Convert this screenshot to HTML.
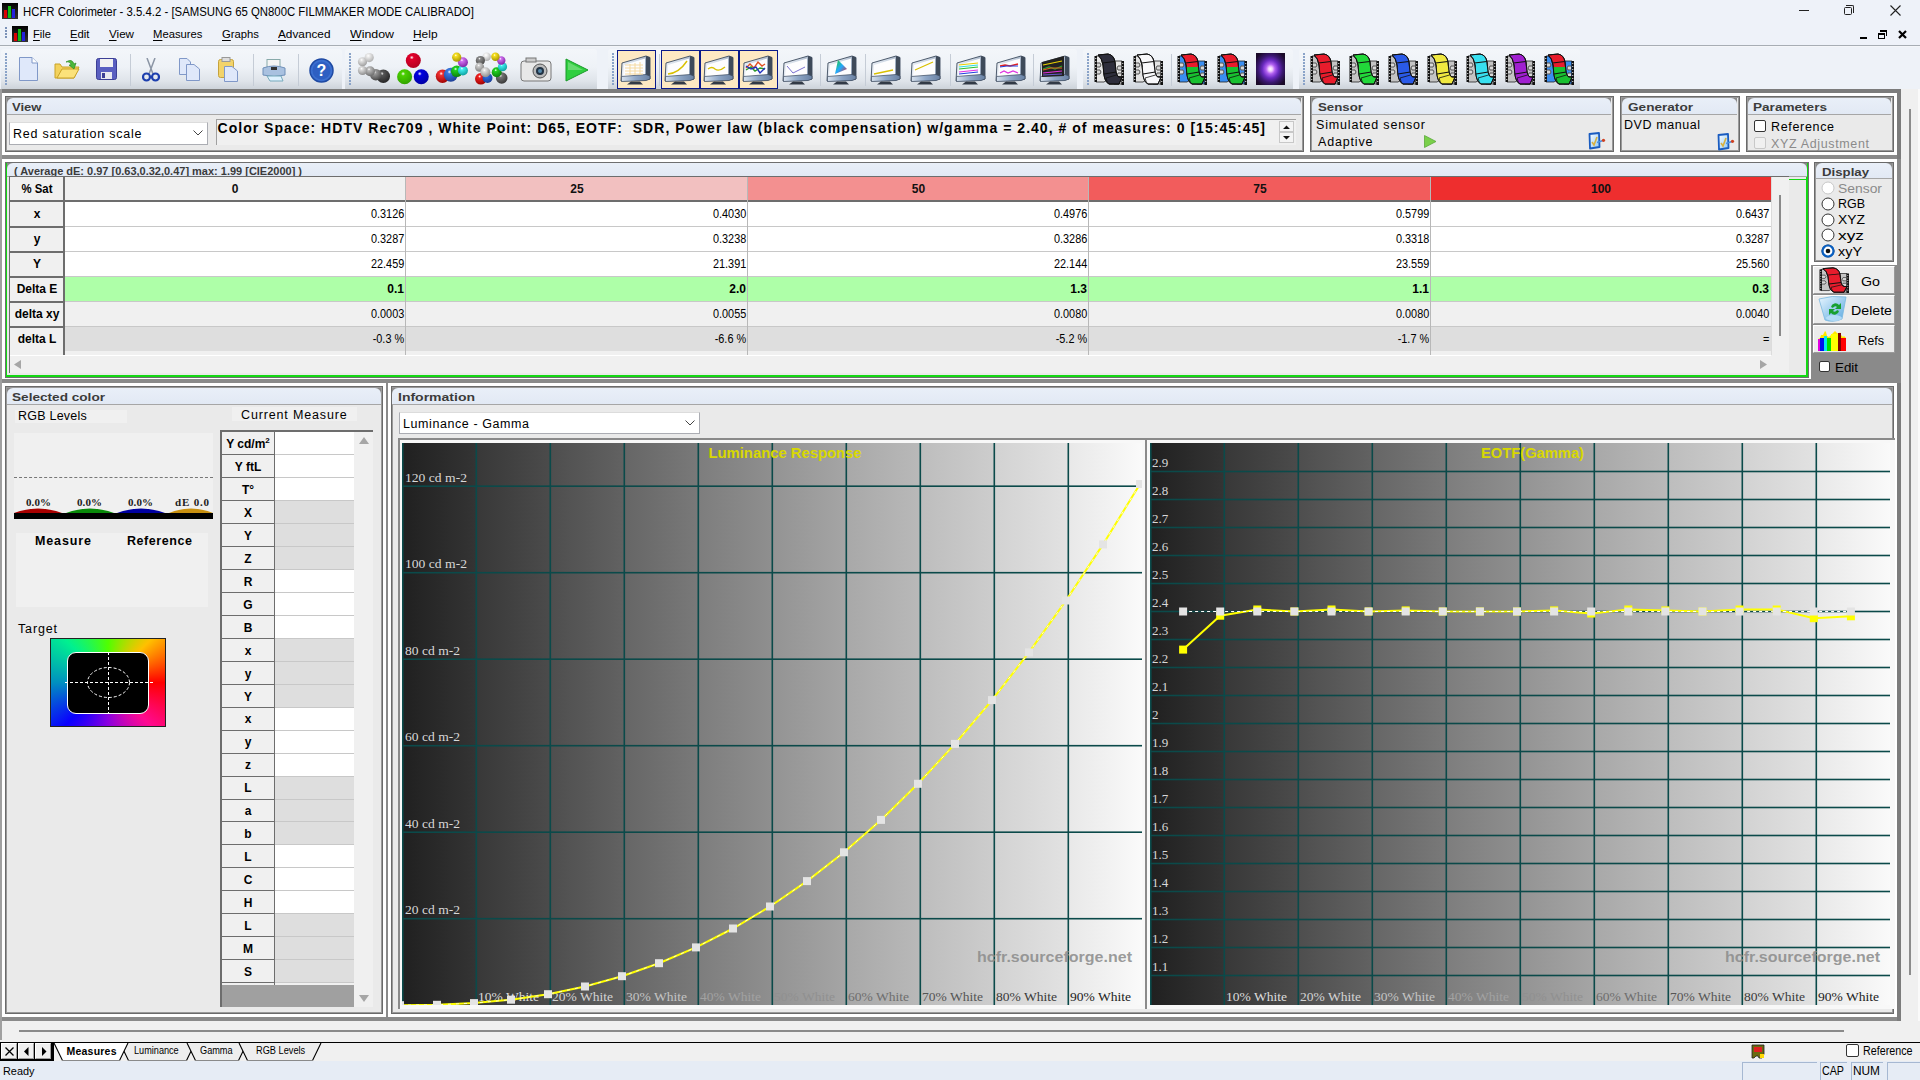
<!DOCTYPE html><html><head><meta charset="utf-8"><style>html,body{margin:0;padding:0;width:1920px;height:1080px;overflow:hidden;position:relative;background:#f0f0f0;font-family:"Liberation Sans",sans-serif}</style></head><body><div style="position:absolute;left:0px;top:0px;width:1920px;height:22px;background:#eef2f9"></div>
<svg style="position:absolute;left:2px;top:3px" width="16" height="16" viewBox="0 0 16 16"><defs><linearGradient id="ag2" x1="0" y1="0" x2="0" y2="1"><stop offset="0" stop-color="#000"/><stop offset="1" stop-color="#333"/></linearGradient></defs><rect x="0" y="0" width="16" height="16" fill="url(#ag2)"/><rect x="2" y="7" width="3" height="8" fill="#d00"/><rect x="6" y="3" width="3" height="12" fill="#1b1"/><rect x="10" y="6" width="3" height="9" fill="#22d"/></svg>
<div style="position:absolute;left:23px;top:3.74px;font:400 12.3px/16px 'Liberation Sans', sans-serif;color:#000;letter-spacing:0.000px;white-space:pre;transform:scaleX(0.9241);transform-origin:left center;">HCFR Colorimeter - 3.5.4.2 - [SAMSUNG 65 QN800C FILMMAKER MODE CALIBRADO]</div>
<div style="position:absolute;left:1799px;top:10px;width:10px;height:1px;background:#222"></div>
<div style="position:absolute;left:1844px;top:7px;width:8px;height:8px;border:1px solid #222;border-radius:1.5px;box-sizing:border-box"></div>
<div style="position:absolute;left:1846px;top:5px;width:8px;height:8px;border-top:1px solid #222;border-right:1px solid #222;border-top-right-radius:2px;box-sizing:border-box"></div>
<svg style="position:absolute;left:1890px;top:5px" width="11" height="11"><path d="M0.5 0.5L10.5 10.5M10.5 0.5L0.5 10.5" stroke="#222" stroke-width="1.1"/></svg>
<div style="position:absolute;left:0px;top:22px;width:1920px;height:23px;background:#eef2f9"></div>
<div style="position:absolute;left:0px;top:45px;width:1920px;height:1px;background:#a7adb4"></div>
<div style="position:absolute;left:0px;top:46px;width:1920px;height:1px;background:#f4f6f9"></div>
<div style="position:absolute;left:5px;top:27px;width:2px;height:2px;background:#7b92b8"></div>
<div style="position:absolute;left:5px;top:30px;width:2px;height:2px;background:#7b92b8"></div>
<div style="position:absolute;left:5px;top:33px;width:2px;height:2px;background:#7b92b8"></div>
<div style="position:absolute;left:5px;top:36px;width:2px;height:2px;background:#7b92b8"></div>
<svg style="position:absolute;left:12px;top:26px" width="16" height="16" viewBox="0 0 16 16"><defs><linearGradient id="ag12" x1="0" y1="0" x2="0" y2="1"><stop offset="0" stop-color="#000"/><stop offset="1" stop-color="#333"/></linearGradient></defs><rect x="0" y="0" width="16" height="16" fill="url(#ag12)"/><rect x="2" y="7" width="3" height="8" fill="#d00"/><rect x="6" y="3" width="3" height="12" fill="#1b1"/><rect x="10" y="6" width="3" height="9" fill="#22d"/></svg>
<div style="position:absolute;left:33px;top:27.02px;font:400 11.5px/15px 'Liberation Sans', sans-serif;color:#000;letter-spacing:0.000px;white-space:pre;transform:scaleX(0.9713);transform-origin:left center;"><u style="text-decoration-thickness:1px;text-underline-offset:2px">F</u>ile</div>
<div style="position:absolute;left:70px;top:27.02px;font:400 11.5px/15px 'Liberation Sans', sans-serif;color:#000;letter-spacing:0.000px;white-space:pre;transform:scaleX(0.9840);transform-origin:left center;"><u style="text-decoration-thickness:1px;text-underline-offset:2px">E</u>dit</div>
<div style="position:absolute;left:108.5px;top:27.02px;font:400 11.5px/15px 'Liberation Sans', sans-serif;color:#000;letter-spacing:0.000px;white-space:pre;transform:scaleX(1.0113);transform-origin:left center;"><u style="text-decoration-thickness:1px;text-underline-offset:2px">V</u>iew</div>
<div style="position:absolute;left:153px;top:27.02px;font:400 11.5px/15px 'Liberation Sans', sans-serif;color:#000;letter-spacing:0.000px;white-space:pre;transform:scaleX(0.9803);transform-origin:left center;"><u style="text-decoration-thickness:1px;text-underline-offset:2px">M</u>easures</div>
<div style="position:absolute;left:222px;top:27.02px;font:400 11.5px/15px 'Liberation Sans', sans-serif;color:#000;letter-spacing:0.000px;white-space:pre;transform:scaleX(0.9811);transform-origin:left center;"><u style="text-decoration-thickness:1px;text-underline-offset:2px">G</u>raphs</div>
<div style="position:absolute;left:278px;top:27.02px;font:400 11.5px/15px 'Liberation Sans', sans-serif;color:#000;letter-spacing:0.000px;white-space:pre;transform:scaleX(1.0264);transform-origin:left center;"><u style="text-decoration-thickness:1px;text-underline-offset:2px">A</u>dvanced</div>
<div style="position:absolute;left:350px;top:27.02px;font:400 11.5px/15px 'Liberation Sans', sans-serif;color:#000;letter-spacing:0.000px;white-space:pre;transform:scaleX(1.0757);transform-origin:left center;"><u style="text-decoration-thickness:1px;text-underline-offset:2px">W</u>indow</div>
<div style="position:absolute;left:413px;top:27.02px;font:400 11.5px/15px 'Liberation Sans', sans-serif;color:#000;letter-spacing:0.000px;white-space:pre;transform:scaleX(1.0358);transform-origin:left center;"><u style="text-decoration-thickness:1px;text-underline-offset:2px">H</u>elp</div>
<div style="position:absolute;left:1860px;top:37px;width:7px;height:2px;background:#000"></div>
<div style="position:absolute;left:1878px;top:33px;width:7px;height:6px;border:1px solid #000;border-top-width:2px;box-sizing:border-box"></div>
<div style="position:absolute;left:1880px;top:30px;width:7px;height:6px;border-top:2px solid #000;border-right:1px solid #000;box-sizing:border-box"></div>
<svg style="position:absolute;left:1898px;top:30px" width="9" height="9"><path d="M1 1L8 8M8 1L1 8" stroke="#000" stroke-width="2.2"/></svg>
<div style="position:absolute;left:0px;top:47px;width:1920px;height:44px;background:#eef2f8"></div>
<div style="position:absolute;left:1px;top:49px;width:341px;height:40px;border-radius:3px 3px 0 0;background:linear-gradient(#f3f6fa 0%,#eef2f7 45%,#dfe4ea 80%,#cdd3da 100%)"></div>
<div style="position:absolute;left:5px;top:53px;width:2px;height:2px;background:#8aa3c8"></div>
<div style="position:absolute;left:5px;top:56px;width:2px;height:2px;background:#8aa3c8"></div>
<div style="position:absolute;left:5px;top:59px;width:2px;height:2px;background:#8aa3c8"></div>
<div style="position:absolute;left:5px;top:62px;width:2px;height:2px;background:#8aa3c8"></div>
<div style="position:absolute;left:5px;top:65px;width:2px;height:2px;background:#8aa3c8"></div>
<div style="position:absolute;left:5px;top:68px;width:2px;height:2px;background:#8aa3c8"></div>
<div style="position:absolute;left:5px;top:71px;width:2px;height:2px;background:#8aa3c8"></div>
<div style="position:absolute;left:5px;top:74px;width:2px;height:2px;background:#8aa3c8"></div>
<div style="position:absolute;left:5px;top:77px;width:2px;height:2px;background:#8aa3c8"></div>
<div style="position:absolute;left:5px;top:80px;width:2px;height:2px;background:#8aa3c8"></div>
<div style="position:absolute;left:5px;top:83px;width:2px;height:2px;background:#8aa3c8"></div>
<div style="position:absolute;left:345px;top:49px;width:252px;height:40px;border-radius:3px 3px 0 0;background:linear-gradient(#f3f6fa 0%,#eef2f7 45%,#dfe4ea 80%,#cdd3da 100%)"></div>
<div style="position:absolute;left:349px;top:53px;width:2px;height:2px;background:#8aa3c8"></div>
<div style="position:absolute;left:349px;top:56px;width:2px;height:2px;background:#8aa3c8"></div>
<div style="position:absolute;left:349px;top:59px;width:2px;height:2px;background:#8aa3c8"></div>
<div style="position:absolute;left:349px;top:62px;width:2px;height:2px;background:#8aa3c8"></div>
<div style="position:absolute;left:349px;top:65px;width:2px;height:2px;background:#8aa3c8"></div>
<div style="position:absolute;left:349px;top:68px;width:2px;height:2px;background:#8aa3c8"></div>
<div style="position:absolute;left:349px;top:71px;width:2px;height:2px;background:#8aa3c8"></div>
<div style="position:absolute;left:349px;top:74px;width:2px;height:2px;background:#8aa3c8"></div>
<div style="position:absolute;left:349px;top:77px;width:2px;height:2px;background:#8aa3c8"></div>
<div style="position:absolute;left:349px;top:80px;width:2px;height:2px;background:#8aa3c8"></div>
<div style="position:absolute;left:349px;top:83px;width:2px;height:2px;background:#8aa3c8"></div>
<div style="position:absolute;left:608px;top:49px;width:469px;height:40px;border-radius:3px 3px 0 0;background:linear-gradient(#f3f6fa 0%,#eef2f7 45%,#dfe4ea 80%,#cdd3da 100%)"></div>
<div style="position:absolute;left:612px;top:53px;width:2px;height:2px;background:#8aa3c8"></div>
<div style="position:absolute;left:612px;top:56px;width:2px;height:2px;background:#8aa3c8"></div>
<div style="position:absolute;left:612px;top:59px;width:2px;height:2px;background:#8aa3c8"></div>
<div style="position:absolute;left:612px;top:62px;width:2px;height:2px;background:#8aa3c8"></div>
<div style="position:absolute;left:612px;top:65px;width:2px;height:2px;background:#8aa3c8"></div>
<div style="position:absolute;left:612px;top:68px;width:2px;height:2px;background:#8aa3c8"></div>
<div style="position:absolute;left:612px;top:71px;width:2px;height:2px;background:#8aa3c8"></div>
<div style="position:absolute;left:612px;top:74px;width:2px;height:2px;background:#8aa3c8"></div>
<div style="position:absolute;left:612px;top:77px;width:2px;height:2px;background:#8aa3c8"></div>
<div style="position:absolute;left:612px;top:80px;width:2px;height:2px;background:#8aa3c8"></div>
<div style="position:absolute;left:612px;top:83px;width:2px;height:2px;background:#8aa3c8"></div>
<div style="position:absolute;left:1083px;top:49px;width:210px;height:40px;border-radius:3px 3px 0 0;background:linear-gradient(#f3f6fa 0%,#eef2f7 45%,#dfe4ea 80%,#cdd3da 100%)"></div>
<div style="position:absolute;left:1087px;top:53px;width:2px;height:2px;background:#8aa3c8"></div>
<div style="position:absolute;left:1087px;top:56px;width:2px;height:2px;background:#8aa3c8"></div>
<div style="position:absolute;left:1087px;top:59px;width:2px;height:2px;background:#8aa3c8"></div>
<div style="position:absolute;left:1087px;top:62px;width:2px;height:2px;background:#8aa3c8"></div>
<div style="position:absolute;left:1087px;top:65px;width:2px;height:2px;background:#8aa3c8"></div>
<div style="position:absolute;left:1087px;top:68px;width:2px;height:2px;background:#8aa3c8"></div>
<div style="position:absolute;left:1087px;top:71px;width:2px;height:2px;background:#8aa3c8"></div>
<div style="position:absolute;left:1087px;top:74px;width:2px;height:2px;background:#8aa3c8"></div>
<div style="position:absolute;left:1087px;top:77px;width:2px;height:2px;background:#8aa3c8"></div>
<div style="position:absolute;left:1087px;top:80px;width:2px;height:2px;background:#8aa3c8"></div>
<div style="position:absolute;left:1087px;top:83px;width:2px;height:2px;background:#8aa3c8"></div>
<div style="position:absolute;left:1299px;top:49px;width:281px;height:40px;border-radius:3px 3px 0 0;background:linear-gradient(#f3f6fa 0%,#eef2f7 45%,#dfe4ea 80%,#cdd3da 100%)"></div>
<div style="position:absolute;left:1303px;top:53px;width:2px;height:2px;background:#8aa3c8"></div>
<div style="position:absolute;left:1303px;top:56px;width:2px;height:2px;background:#8aa3c8"></div>
<div style="position:absolute;left:1303px;top:59px;width:2px;height:2px;background:#8aa3c8"></div>
<div style="position:absolute;left:1303px;top:62px;width:2px;height:2px;background:#8aa3c8"></div>
<div style="position:absolute;left:1303px;top:65px;width:2px;height:2px;background:#8aa3c8"></div>
<div style="position:absolute;left:1303px;top:68px;width:2px;height:2px;background:#8aa3c8"></div>
<div style="position:absolute;left:1303px;top:71px;width:2px;height:2px;background:#8aa3c8"></div>
<div style="position:absolute;left:1303px;top:74px;width:2px;height:2px;background:#8aa3c8"></div>
<div style="position:absolute;left:1303px;top:77px;width:2px;height:2px;background:#8aa3c8"></div>
<div style="position:absolute;left:1303px;top:80px;width:2px;height:2px;background:#8aa3c8"></div>
<div style="position:absolute;left:1303px;top:83px;width:2px;height:2px;background:#8aa3c8"></div>
<div style="position:absolute;left:130px;top:54px;width:1px;height:32px;background:#c5ccd6"></div>
<div style="position:absolute;left:253px;top:54px;width:1px;height:32px;background:#c5ccd6"></div>
<div style="position:absolute;left:298px;top:54px;width:1px;height:32px;background:#c5ccd6"></div>
<div style="position:absolute;left:659px;top:54px;width:1px;height:32px;background:#c5ccd6"></div>
<div style="position:absolute;left:820px;top:54px;width:1px;height:32px;background:#c5ccd6"></div>
<div style="position:absolute;left:865px;top:54px;width:1px;height:32px;background:#c5ccd6"></div>
<div style="position:absolute;left:950px;top:54px;width:1px;height:32px;background:#c5ccd6"></div>
<div style="position:absolute;left:1033px;top:54px;width:1px;height:32px;background:#c5ccd6"></div>
<div style="position:absolute;left:1171px;top:54px;width:1px;height:32px;background:#c5ccd6"></div>
<svg style="position:absolute;left:19px;top:57px" width="19" height="24" viewBox="0 0 19 24"><path d="M0.5 0.5H13L18.5 6V23.5H0.5Z" fill="#dfe8fa" stroke="#8098c8"/><path d="M13 0.5V6H18.5" fill="#fff" stroke="#8098c8"/></svg>
<svg style="position:absolute;left:54px;top:58px" width="26" height="22" viewBox="0 0 26 22"><path d="M1 6 L1 20 L20 20 L25 9 L8 9 L6 6Z" fill="#f3d25c" stroke="#c9a227"/><path d="M3 20 L8 11 L25 11 L20 20Z" fill="#fbe27a" stroke="#c9a227"/><path d="M12 4 Q18 0 20 6 L22 5 L20 11 L15 7 L17 7 Q16 3 12 4Z" fill="#4cb83a" stroke="#2c8a22" stroke-width="0.7"/></svg>
<svg style="position:absolute;left:96px;top:58px" width="21" height="22" viewBox="0 0 21 22"><rect x="0.5" y="0.5" width="20" height="21" rx="2" fill="#5a5fc0" stroke="#3c3f96"/><rect x="4" y="1" width="13" height="8" fill="#f2f2f2"/><rect x="5" y="14" width="11" height="7" fill="#e8e8f0"/><rect x="6" y="15" width="3" height="5" fill="#3c3f96"/></svg>
<svg style="position:absolute;left:142px;top:58px" width="18" height="24" viewBox="0 0 18 24"><path d="M5 0 L11 16 M13 0 L7 16" stroke="#8b95a5" stroke-width="1.5"/><circle cx="4.5" cy="19" r="3.5" fill="none" stroke="#1d3fae" stroke-width="2.2"/><circle cx="13.5" cy="19" r="3.5" fill="none" stroke="#1d3fae" stroke-width="2.2"/></svg>
<svg style="position:absolute;left:179px;top:58px" width="22" height="23" viewBox="0 0 22 23"><path d="M0.5 0.5H8L11.5 4V16.5H0.5Z" fill="#dfe8fa" stroke="#8098c8"/><path d="M7.5 6.5H15L20.5 11V22.5H7.5Z" fill="#dfe8fa" stroke="#8098c8"/></svg>
<svg style="position:absolute;left:218px;top:57px" width="21" height="25" viewBox="0 0 21 25"><rect x="0.5" y="2.5" width="15" height="18" rx="2" fill="#f2d36a" stroke="#c5a23c"/><rect x="4" y="0.5" width="8" height="4" fill="#ddd" stroke="#999"/><path d="M6.5 9.5H14L19.5 14V24.5H6.5Z" fill="#dfe8fa" stroke="#8098c8"/></svg>
<svg style="position:absolute;left:262px;top:59px" width="24" height="23" viewBox="0 0 24 23"><rect x="5" y="0.5" width="13" height="8" fill="#f4f4f4" stroke="#8aa"/><path d="M1 9 Q12 5 23 9 L23 16 Q12 19 1 16Z" fill="#a9c1e0" stroke="#6f8fb8"/><rect x="9" y="8" width="6" height="3" fill="#333"/><path d="M5 17 L19 17 L21 22 L8 22Z" fill="#dff2ff" stroke="#7ab"/></svg>
<svg style="position:absolute;left:309px;top:58px" width="25" height="25" viewBox="0 0 25 25"><circle cx="12.5" cy="12.5" r="11.5" fill="#3b6fd0" stroke="#1f4aa3" stroke-width="1.5"/><circle cx="12.5" cy="12.5" r="9" fill="#2e5fc2"/><text x="12.5" y="18" font-family="Liberation Sans" font-weight="700" font-size="16" fill="#fff" text-anchor="middle">?</text></svg>
<svg width="0" height="0" style="position:absolute"><defs><radialGradient id="sp0" cx="0.4" cy="0.3" r="0.75"><stop offset="0" stop-color="#ffffff"/><stop offset="0.18" stop-color="#555"/><stop offset="1" stop-color="#222"/></radialGradient></defs></svg>
<svg width="0" height="0" style="position:absolute"><defs><radialGradient id="sp1" cx="0.4" cy="0.3" r="0.75"><stop offset="0" stop-color="#ffffff"/><stop offset="0.18" stop-color="#999"/><stop offset="1" stop-color="#444"/></radialGradient></defs></svg>
<svg width="0" height="0" style="position:absolute"><defs><radialGradient id="sp2" cx="0.4" cy="0.3" r="0.75"><stop offset="0" stop-color="#ffffff"/><stop offset="0.18" stop-color="#bbb"/><stop offset="1" stop-color="#666"/></radialGradient></defs></svg>
<svg width="0" height="0" style="position:absolute"><defs><radialGradient id="sp3" cx="0.4" cy="0.3" r="0.75"><stop offset="0" stop-color="#ffffff"/><stop offset="0.18" stop-color="#ddd"/><stop offset="1" stop-color="#888"/></radialGradient></defs></svg>
<svg width="0" height="0" style="position:absolute"><defs><radialGradient id="sp4" cx="0.4" cy="0.3" r="0.75"><stop offset="0" stop-color="#ffffff"/><stop offset="0.18" stop-color="#e4e4e4"/><stop offset="1" stop-color="#999"/></radialGradient></defs></svg>
<svg width="0" height="0" style="position:absolute"><defs><radialGradient id="sp5" cx="0.4" cy="0.3" r="0.75"><stop offset="0" stop-color="#ffffff"/><stop offset="0.18" stop-color="#eee"/><stop offset="1" stop-color="#aaa"/></radialGradient></defs></svg>
<svg width="0" height="0" style="position:absolute"><defs><radialGradient id="sp6" cx="0.4" cy="0.3" r="0.75"><stop offset="0" stop-color="#ffffff"/><stop offset="0.18" stop-color="#e0002a"/><stop offset="1" stop-color="#b00020"/></radialGradient></defs></svg>
<svg width="0" height="0" style="position:absolute"><defs><radialGradient id="sp7" cx="0.4" cy="0.3" r="0.75"><stop offset="0" stop-color="#ffffff"/><stop offset="0.18" stop-color="#4ad000"/><stop offset="1" stop-color="#30a000"/></radialGradient></defs></svg>
<svg width="0" height="0" style="position:absolute"><defs><radialGradient id="sp8" cx="0.4" cy="0.3" r="0.75"><stop offset="0" stop-color="#ffffff"/><stop offset="0.18" stop-color="#0000e0"/><stop offset="1" stop-color="#0000a0"/></radialGradient></defs></svg>
<svg width="0" height="0" style="position:absolute"><defs><radialGradient id="sp9" cx="0.4" cy="0.3" r="0.75"><stop offset="0" stop-color="#ffffff"/><stop offset="0.18" stop-color="#f03030"/><stop offset="1" stop-color="#900"/></radialGradient></defs></svg>
<svg width="0" height="0" style="position:absolute"><defs><radialGradient id="sp10" cx="0.4" cy="0.3" r="0.75"><stop offset="0" stop-color="#ffffff"/><stop offset="0.18" stop-color="#3a7ae0"/><stop offset="1" stop-color="#1a3a90"/></radialGradient></defs></svg>
<svg width="0" height="0" style="position:absolute"><defs><radialGradient id="sp11" cx="0.4" cy="0.3" r="0.75"><stop offset="0" stop-color="#ffffff"/><stop offset="0.18" stop-color="#20d020"/><stop offset="1" stop-color="#0a7a0a"/></radialGradient></defs></svg>
<svg width="0" height="0" style="position:absolute"><defs><radialGradient id="sp12" cx="0.4" cy="0.3" r="0.75"><stop offset="0" stop-color="#ffffff"/><stop offset="0.18" stop-color="#40f0f0"/><stop offset="1" stop-color="#0a9a9a"/></radialGradient></defs></svg>
<svg width="0" height="0" style="position:absolute"><defs><radialGradient id="sp13" cx="0.4" cy="0.3" r="0.75"><stop offset="0" stop-color="#ffffff"/><stop offset="0.18" stop-color="#d070f0"/><stop offset="1" stop-color="#7a20a0"/></radialGradient></defs></svg>
<svg width="0" height="0" style="position:absolute"><defs><radialGradient id="sp14" cx="0.4" cy="0.3" r="0.75"><stop offset="0" stop-color="#ffffff"/><stop offset="0.18" stop-color="#f8e020"/><stop offset="1" stop-color="#a09000"/></radialGradient></defs></svg>
<svg width="0" height="0" style="position:absolute"><defs><radialGradient id="sp15" cx="0.4" cy="0.3" r="0.75"><stop offset="0" stop-color="#ffffff"/><stop offset="0.18" stop-color="#f02020"/><stop offset="1" stop-color="#900"/></radialGradient></defs></svg>
<svg width="0" height="0" style="position:absolute"><defs><radialGradient id="sp16" cx="0.4" cy="0.3" r="0.75"><stop offset="0" stop-color="#ffffff"/><stop offset="0.18" stop-color="#2a6ae0"/><stop offset="1" stop-color="#1a3a90"/></radialGradient></defs></svg>
<svg width="0" height="0" style="position:absolute"><defs><radialGradient id="sp17" cx="0.4" cy="0.3" r="0.75"><stop offset="0" stop-color="#ffffff"/><stop offset="0.18" stop-color="#777"/><stop offset="1" stop-color="#333"/></radialGradient></defs></svg>
<svg width="0" height="0" style="position:absolute"><defs><radialGradient id="sp18" cx="0.4" cy="0.3" r="0.75"><stop offset="0" stop-color="#ffffff"/><stop offset="0.18" stop-color="#f4f4f4"/><stop offset="1" stop-color="#aaa"/></radialGradient></defs></svg>
<svg width="0" height="0" style="position:absolute"><defs><radialGradient id="sp19" cx="0.4" cy="0.3" r="0.75"><stop offset="0" stop-color="#ffffff"/><stop offset="0.18" stop-color="#888"/><stop offset="1" stop-color="#444"/></radialGradient></defs></svg>
<svg width="0" height="0" style="position:absolute"><defs><radialGradient id="sp20" cx="0.4" cy="0.3" r="0.75"><stop offset="0" stop-color="#ffffff"/><stop offset="0.18" stop-color="#ccc"/><stop offset="1" stop-color="#777"/></radialGradient></defs></svg>
<svg style="position:absolute;left:340px;top:50px" width="180" height="40"><circle cx="43.30000000000001" cy="26.299999999999997" r="6.7" fill="url(#sp0)"/><circle cx="35.80000000000001" cy="24.700000000000003" r="5.8" fill="url(#sp1)"/><circle cx="30" cy="21.299999999999997" r="5" fill="url(#sp2)"/><circle cx="22.5" cy="20.5" r="4.6" fill="url(#sp3)"/><circle cx="22.5" cy="11.75" r="4.6" fill="url(#sp4)"/><circle cx="29.19999999999999" cy="7.600000000000001" r="4.6" fill="url(#sp5)"/><circle cx="73.30000000000001" cy="10.5" r="7.5" fill="url(#sp6)"/><circle cx="64.60000000000002" cy="26.75" r="7.5" fill="url(#sp7)"/><circle cx="81.25" cy="26.75" r="7.5" fill="url(#sp8)"/><circle cx="102.5" cy="26.299999999999997" r="6.7" fill="url(#sp9)"/><circle cx="110.80000000000001" cy="24.700000000000003" r="7" fill="url(#sp10)"/><circle cx="116.69999999999999" cy="21.299999999999997" r="5.8" fill="url(#sp11)"/><circle cx="122.89999999999998" cy="20.5" r="5" fill="url(#sp12)"/><circle cx="122.89999999999998" cy="12.200000000000003" r="5" fill="url(#sp13)"/><circle cx="116.69999999999999" cy="7.200000000000003" r="4.6" fill="url(#sp14)"/><circle cx="140.8" cy="28.799999999999997" r="5.8" fill="url(#sp15)"/><circle cx="147.5" cy="28" r="5" fill="url(#sp16)"/><circle cx="161.7" cy="28" r="5.8" fill="url(#sp17)"/><circle cx="156.7" cy="22.200000000000003" r="5" fill="url(#sp11)"/><circle cx="162.5" cy="16.75" r="4.6" fill="url(#sp12)"/><circle cx="161.25" cy="10.5" r="4.2" fill="url(#sp13)"/><circle cx="155.39999999999998" cy="6.75" r="4.2" fill="url(#sp14)"/><circle cx="146.7" cy="6.75" r="4.2" fill="url(#sp18)"/><circle cx="140.39999999999998" cy="10.5" r="4.6" fill="url(#sp19)"/><circle cx="139.60000000000002" cy="17.200000000000003" r="4.6" fill="url(#sp20)"/><circle cx="145.39999999999998" cy="22.200000000000003" r="5" fill="url(#sp3)"/></svg>
<svg style="position:absolute;left:520px;top:56px" width="32" height="28" viewBox="0 0 32 28"><rect x="1" y="5" width="30" height="20" rx="3" fill="#e8e8e8" stroke="#777"/><rect x="6" y="2" width="10" height="4" fill="#ccc" stroke="#777"/><circle cx="20" cy="15" r="7" fill="#bbb" stroke="#555"/><circle cx="20" cy="15" r="4" fill="#234"/><circle cx="20" cy="15" r="2" fill="#58a"/></svg>
<svg style="position:absolute;left:565px;top:58px" width="24" height="24" viewBox="0 0 24 24"><path d="M1 1 L23 12 L1 23Z" fill="#2fcf3f" stroke="#1a9a2a"/><path d="M3 4 L18 12 L3 12Z" fill="#8be38f" opacity="0.6"/></svg>
<svg width="0" height="0" style="position:absolute"><defs><linearGradient id="mbz" x1="0" y1="0" x2="1" y2="0.3"><stop offset="0" stop-color="#f2f5f9"/><stop offset="0.6" stop-color="#c9d4e2"/><stop offset="1" stop-color="#8a9ab0"/></linearGradient><linearGradient id="mbase" x1="0" y1="0" x2="1" y2="0"><stop offset="0" stop-color="#d8e2ee"/><stop offset="0.5" stop-color="#8ea6c6"/><stop offset="1" stop-color="#6a82a4"/></linearGradient></defs></svg>
<div style="position:absolute;left:617px;top:50px;width:39px;height:39px;background:#fde9c3;border:1.5px solid #0a1a8a;box-sizing:border-box"></div>
<svg style="position:absolute;left:620px;top:53px" width="32" height="32" viewBox="0 0 32 32"><path d="M2 10 L26 3 L30 4.5 L30 26 L26 27 L1 28Z" fill="url(#mbz)" stroke="#3c4b5e" stroke-width="0.9"/><path d="M26 3 L30 4.5 L30 26 L26 27Z" fill="#3e4a5a"/><path d="M4 12 L25 5.5 L25 22 L3 23.5Z" fill="#fdfdfe"/><path d="M1.5 23.5 L26 21.5 L30 23 L30 26 L26 27.5 L1.5 28.5Z" fill="url(#mbase)" stroke="#3c4b5e" stroke-width="0.7"/><path d="M11 28.5 L20 28.5 L23 31.5 L7 31.5Z" fill="#323a46"/><g stroke="#f5d9a0" stroke-width="1" fill="none"><path d="M5 12H23M5 15H23M5 18H23M5 21H23M10 11V22M15 10V22M20 9V22"/></g></svg>
<div style="position:absolute;left:661px;top:50px;width:39px;height:39px;background:#fde9c3;border:1.5px solid #0a1a8a;box-sizing:border-box"></div>
<svg style="position:absolute;left:664px;top:53px" width="32" height="32" viewBox="0 0 32 32"><path d="M2 10 L26 3 L30 4.5 L30 26 L26 27 L1 28Z" fill="url(#mbz)" stroke="#3c4b5e" stroke-width="0.9"/><path d="M26 3 L30 4.5 L30 26 L26 27Z" fill="#3e4a5a"/><path d="M4 12 L25 5.5 L25 22 L3 23.5Z" fill="#fdfdfe"/><path d="M1.5 23.5 L26 21.5 L30 23 L30 26 L26 27.5 L1.5 28.5Z" fill="url(#mbase)" stroke="#3c4b5e" stroke-width="0.7"/><path d="M11 28.5 L20 28.5 L23 31.5 L7 31.5Z" fill="#323a46"/><path d="M4 21 Q15 20 23 8" stroke="#d8c000" stroke-width="1.4" fill="none"/></svg>
<div style="position:absolute;left:700px;top:50px;width:39px;height:39px;background:#fde9c3;border:1.5px solid #0a1a8a;box-sizing:border-box"></div>
<svg style="position:absolute;left:703px;top:53px" width="32" height="32" viewBox="0 0 32 32"><path d="M2 10 L26 3 L30 4.5 L30 26 L26 27 L1 28Z" fill="url(#mbz)" stroke="#3c4b5e" stroke-width="0.9"/><path d="M26 3 L30 4.5 L30 26 L26 27Z" fill="#3e4a5a"/><path d="M4 12 L25 5.5 L25 22 L3 23.5Z" fill="#fdfdfe"/><path d="M1.5 23.5 L26 21.5 L30 23 L30 26 L26 27.5 L1.5 28.5Z" fill="url(#mbase)" stroke="#3c4b5e" stroke-width="0.7"/><path d="M11 28.5 L20 28.5 L23 31.5 L7 31.5Z" fill="#323a46"/><path d="M5 16 Q9 13 12 16 Q16 19 22 14" stroke="#d8c000" stroke-width="1.4" fill="none"/></svg>
<div style="position:absolute;left:739px;top:50px;width:39px;height:39px;background:#fde9c3;border:1.5px solid #0a1a8a;box-sizing:border-box"></div>
<svg style="position:absolute;left:742px;top:53px" width="32" height="32" viewBox="0 0 32 32"><path d="M2 10 L26 3 L30 4.5 L30 26 L26 27 L1 28Z" fill="url(#mbz)" stroke="#3c4b5e" stroke-width="0.9"/><path d="M26 3 L30 4.5 L30 26 L26 27Z" fill="#3e4a5a"/><path d="M4 12 L25 5.5 L25 22 L3 23.5Z" fill="#fdfdfe"/><path d="M1.5 23.5 L26 21.5 L30 23 L30 26 L26 27.5 L1.5 28.5Z" fill="url(#mbase)" stroke="#3c4b5e" stroke-width="0.7"/><path d="M11 28.5 L20 28.5 L23 31.5 L7 31.5Z" fill="#323a46"/><path d="M4 15 L8 11 L12 15 L16 9 L20 13 L23 11" stroke="#e05020" stroke-width="1.4" fill="none"/><path d="M4 17 L9 14 L13 18 L18 15 L23 16" stroke="#2a9a2a" stroke-width="1.4" fill="none"/><path d="M4 13 L9 16 L14 14 L18 20 L23 15" stroke="#2030c0" stroke-width="1.4" fill="none"/></svg>
<svg style="position:absolute;left:782px;top:53px" width="32" height="32" viewBox="0 0 32 32"><path d="M2 10 L26 3 L30 4.5 L30 26 L26 27 L1 28Z" fill="url(#mbz)" stroke="#3c4b5e" stroke-width="0.9"/><path d="M26 3 L30 4.5 L30 26 L26 27Z" fill="#3e4a5a"/><path d="M4 12 L25 5.5 L25 22 L3 23.5Z" fill="#fdfdfe"/><path d="M1.5 23.5 L26 21.5 L30 23 L30 26 L26 27.5 L1.5 28.5Z" fill="url(#mbase)" stroke="#3c4b5e" stroke-width="0.7"/><path d="M11 28.5 L20 28.5 L23 31.5 L7 31.5Z" fill="#323a46"/><path d="M5 13 L11 20 L17 17 L23 14" stroke="#7a70d0" stroke-width="1" fill="none"/></svg>
<svg style="position:absolute;left:826px;top:53px" width="32" height="32" viewBox="0 0 32 32"><path d="M2 10 L26 3 L30 4.5 L30 26 L26 27 L1 28Z" fill="url(#mbz)" stroke="#3c4b5e" stroke-width="0.9"/><path d="M26 3 L30 4.5 L30 26 L26 27Z" fill="#3e4a5a"/><path d="M4 12 L25 5.5 L25 22 L3 23.5Z" fill="#fdfdfe"/><path d="M1.5 23.5 L26 21.5 L30 23 L30 26 L26 27.5 L1.5 28.5Z" fill="url(#mbase)" stroke="#3c4b5e" stroke-width="0.7"/><path d="M11 28.5 L20 28.5 L23 31.5 L7 31.5Z" fill="#323a46"/><path d="M9 21 L12 7 L21 16Z" fill="url(#gam)"/><defs><linearGradient id="gam" x1="0" y1="0" x2="1" y2="1"><stop offset="0" stop-color="#2c2"/><stop offset="0.5" stop-color="#2af"/><stop offset="1" stop-color="#e22"/></linearGradient></defs></svg>
<svg style="position:absolute;left:870px;top:53px" width="32" height="32" viewBox="0 0 32 32"><path d="M2 10 L26 3 L30 4.5 L30 26 L26 27 L1 28Z" fill="url(#mbz)" stroke="#3c4b5e" stroke-width="0.9"/><path d="M26 3 L30 4.5 L30 26 L26 27Z" fill="#3e4a5a"/><path d="M4 12 L25 5.5 L25 22 L3 23.5Z" fill="#fdfdfe"/><path d="M1.5 23.5 L26 21.5 L30 23 L30 26 L26 27.5 L1.5 28.5Z" fill="url(#mbase)" stroke="#3c4b5e" stroke-width="0.7"/><path d="M11 28.5 L20 28.5 L23 31.5 L7 31.5Z" fill="#323a46"/><path d="M4 21 L23 17" stroke="#d8c000" stroke-width="1.3" fill="none"/></svg>
<svg style="position:absolute;left:910px;top:53px" width="32" height="32" viewBox="0 0 32 32"><path d="M2 10 L26 3 L30 4.5 L30 26 L26 27 L1 28Z" fill="url(#mbz)" stroke="#3c4b5e" stroke-width="0.9"/><path d="M26 3 L30 4.5 L30 26 L26 27Z" fill="#3e4a5a"/><path d="M4 12 L25 5.5 L25 22 L3 23.5Z" fill="#fdfdfe"/><path d="M1.5 23.5 L26 21.5 L30 23 L30 26 L26 27.5 L1.5 28.5Z" fill="url(#mbase)" stroke="#3c4b5e" stroke-width="0.7"/><path d="M11 28.5 L20 28.5 L23 31.5 L7 31.5Z" fill="#323a46"/><path d="M5 17 L23 9" stroke="#d8c000" stroke-width="1.3" fill="none"/></svg>
<svg style="position:absolute;left:955px;top:53px" width="32" height="32" viewBox="0 0 32 32"><path d="M2 10 L26 3 L30 4.5 L30 26 L26 27 L1 28Z" fill="url(#mbz)" stroke="#3c4b5e" stroke-width="0.9"/><path d="M26 3 L30 4.5 L30 26 L26 27Z" fill="#3e4a5a"/><path d="M4 12 L25 5.5 L25 22 L3 23.5Z" fill="#fdfdfe"/><path d="M1.5 23.5 L26 21.5 L30 23 L30 26 L26 27.5 L1.5 28.5Z" fill="url(#mbase)" stroke="#3c4b5e" stroke-width="0.7"/><path d="M11 28.5 L20 28.5 L23 31.5 L7 31.5Z" fill="#323a46"/><path d="M4 12 L23 10" stroke="#e8d000" stroke-width="1.1"/><path d="M4 14 L23 12" stroke="#30e0e0" stroke-width="1.1"/><path d="M4 16 L23 14" stroke="#30c030" stroke-width="1.1"/><path d="M4 19 L23 17" stroke="#e030e0" stroke-width="1.1"/><path d="M4 21 L23 19" stroke="#2040e0" stroke-width="1.1"/></svg>
<svg style="position:absolute;left:995px;top:53px" width="32" height="32" viewBox="0 0 32 32"><path d="M2 10 L26 3 L30 4.5 L30 26 L26 27 L1 28Z" fill="url(#mbz)" stroke="#3c4b5e" stroke-width="0.9"/><path d="M26 3 L30 4.5 L30 26 L26 27Z" fill="#3e4a5a"/><path d="M4 12 L25 5.5 L25 22 L3 23.5Z" fill="#fdfdfe"/><path d="M1.5 23.5 L26 21.5 L30 23 L30 26 L26 27.5 L1.5 28.5Z" fill="url(#mbase)" stroke="#3c4b5e" stroke-width="0.7"/><path d="M11 28.5 L20 28.5 L23 31.5 L7 31.5Z" fill="#323a46"/><path d="M5 13 L10 12 L15 13 L23 11" stroke="#e02020" stroke-width="1.4" fill="none"/><path d="M5 14 L12 13 L23 13" stroke="#2040e0" stroke-width="1.2" fill="none"/><path d="M5 20 L9 18 L13 20 L18 18 L23 20" stroke="#e030e0" stroke-width="1.3" fill="none"/></svg>
<svg style="position:absolute;left:1039px;top:53px" width="32" height="32" viewBox="0 0 32 32"><path d="M2 10 L26 3 L30 4.5 L30 26 L26 27 L1 28Z" fill="url(#mbz)" stroke="#3c4b5e" stroke-width="0.9"/><path d="M26 3 L30 4.5 L30 26 L26 27Z" fill="#3e4a5a"/><path d="M4 12 L25 5.5 L25 22 L3 23.5Z" fill="#fdfdfe"/><path d="M1.5 23.5 L26 21.5 L30 23 L30 26 L26 27.5 L1.5 28.5Z" fill="url(#mbase)" stroke="#3c4b5e" stroke-width="0.7"/><path d="M11 28.5 L20 28.5 L23 31.5 L7 31.5Z" fill="#323a46"/><path d="M3 9 L25 3 L25 23 L3 24Z" fill="#222"/><path d="M4 12 L23 8" stroke="#e8d000" stroke-width="1.2"/><path d="M4 16 L10 14 L16 16 L23 13" stroke="#30a030" stroke-width="1.2" fill="none"/><path d="M4 17 L12 15 L23 15" stroke="#e06020" stroke-width="1.1" fill="none"/><path d="M4 20 L23 18" stroke="#e030e0" stroke-width="1.1"/><path d="M4 22 L23 21" stroke="#6a5ad0" stroke-width="1.1"/></svg>
<svg style="position:absolute;left:1093px;top:53px" width="32" height="32" viewBox="0 0 32 32" preserveAspectRatio="none"><path d="M3 3 H12 L14 8 V27 L11 29 H3Z" fill="#e8e8e8" stroke="#222" stroke-width="0.8"/><path d="M18 8 H29 V31 H21 L18 26Z" fill="#e8e8e8" stroke="#222" stroke-width="0.8"/><path d="M4 10 Q8 9 8 12 Q8 15 4 14 M4 17 Q8 16 8 19 Q8 22 4 21 M28 13 Q24 12 24 15 Q24 18 28 17 M28 20 Q24 19 24 22 Q24 25 28 24" stroke="#555" stroke-width="1" fill="#d8d8d8"/><rect x="1.5" y="3" width="2.5" height="26" fill="#111"/><rect x="28.5" y="8" width="2.5" height="24" fill="#111"/><path d="M2.75 5 V28 M29.75 10 V31" stroke="#eee" stroke-width="1" stroke-dasharray="1,2"/><path d="M5 2 L15 1 Q21 2 22 9 L23 19 Q24 25 29 24 L26 31 L16 31 Q12 29 11 22 L10 12 Q9 5 5 2Z" fill="#2e2e3c" stroke="#111" stroke-width="1"/><path d="M10.5 14 L10.8 21 Q12 28 16 31 L26 31 L29 24 Q24 25 23 19 L22.5 14Z" fill="#2e2e3c" stroke="none"/><path d="M13 25 Q14 30 16 31 L26 31 L29 24 Q25 25 23.5 22Z" fill="#2e2e3c" stroke="#111" stroke-width="0.8"/><path d="M9.5 10 L21.8 8.5 M11 21 L23.3 19" stroke="#111" stroke-width="1.1"/><path d="M5 2 L15 1 Q21 2 22 9 L23 19 Q24 25 29 24 L26 31 L16 31 Q12 29 11 22 L10 12 Q9 5 5 2Z" fill="none" stroke="#111" stroke-width="1"/></svg>
<svg style="position:absolute;left:1132px;top:53px" width="32" height="32" viewBox="0 0 32 32" preserveAspectRatio="none"><path d="M3 3 H12 L14 8 V27 L11 29 H3Z" fill="#e4e4e4" stroke="#222" stroke-width="0.8"/><path d="M18 8 H29 V31 H21 L18 26Z" fill="#e4e4e4" stroke="#222" stroke-width="0.8"/><path d="M4 10 Q8 9 8 12 Q8 15 4 14 M4 17 Q8 16 8 19 Q8 22 4 21 M28 13 Q24 12 24 15 Q24 18 28 17 M28 20 Q24 19 24 22 Q24 25 28 24" stroke="#555" stroke-width="1" fill="#d8d8d8"/><rect x="1.5" y="3" width="2.5" height="26" fill="#111"/><rect x="28.5" y="8" width="2.5" height="24" fill="#111"/><path d="M2.75 5 V28 M29.75 10 V31" stroke="#eee" stroke-width="1" stroke-dasharray="1,2"/><path d="M5 2 L15 1 Q21 2 22 9 L23 19 Q24 25 29 24 L26 31 L16 31 Q12 29 11 22 L10 12 Q9 5 5 2Z" fill="#f8f8fa" stroke="#111" stroke-width="1"/><path d="M10.5 14 L10.8 21 Q12 28 16 31 L26 31 L29 24 Q24 25 23 19 L22.5 14Z" fill="#f8f8fa" stroke="none"/><path d="M13 25 Q14 30 16 31 L26 31 L29 24 Q25 25 23.5 22Z" fill="#f8f8fa" stroke="#111" stroke-width="0.8"/><path d="M9.5 10 L21.8 8.5 M11 21 L23.3 19" stroke="#111" stroke-width="1.1"/><path d="M5 2 L15 1 Q21 2 22 9 L23 19 Q24 25 29 24 L26 31 L16 31 Q12 29 11 22 L10 12 Q9 5 5 2Z" fill="none" stroke="#111" stroke-width="1"/></svg>
<svg style="position:absolute;left:1176px;top:53px" width="32" height="32" viewBox="0 0 32 32" preserveAspectRatio="none"><path d="M3 3 H12 L14 8 V27 L11 29 H3Z" fill="#3a8ef0" stroke="#222" stroke-width="0.8"/><path d="M18 8 H29 V31 H21 L18 26Z" fill="#3a8ef0" stroke="#222" stroke-width="0.8"/><path d="M4 10 Q8 9 8 12 Q8 15 4 14 M4 17 Q8 16 8 19 Q8 22 4 21 M28 13 Q24 12 24 15 Q24 18 28 17 M28 20 Q24 19 24 22 Q24 25 28 24" stroke="#555" stroke-width="1" fill="#d8d8d8"/><rect x="1.5" y="3" width="2.5" height="26" fill="#111"/><rect x="28.5" y="8" width="2.5" height="24" fill="#111"/><path d="M2.75 5 V28 M29.75 10 V31" stroke="#eee" stroke-width="1" stroke-dasharray="1,2"/><path d="M5 2 L15 1 Q21 2 22 9 L23 19 Q24 25 29 24 L26 31 L16 31 Q12 29 11 22 L10 12 Q9 5 5 2Z" fill="#e81c2c" stroke="#111" stroke-width="1"/><path d="M10.5 14 L10.8 21 Q12 28 16 31 L26 31 L29 24 Q24 25 23 19 L22.5 14Z" fill="#18c030" stroke="none"/><path d="M13 25 Q14 30 16 31 L26 31 L29 24 Q25 25 23.5 22Z" fill="#18c030" stroke="#111" stroke-width="0.8"/><path d="M9.5 10 L21.8 8.5 M11 21 L23.3 19" stroke="#111" stroke-width="1.1"/><path d="M5 2 L15 1 Q21 2 22 9 L23 19 Q24 25 29 24 L26 31 L16 31 Q12 29 11 22 L10 12 Q9 5 5 2Z" fill="none" stroke="#111" stroke-width="1"/></svg>
<svg style="position:absolute;left:1216px;top:53px" width="32" height="32" viewBox="0 0 32 32" preserveAspectRatio="none"><path d="M3 3 H12 L14 8 V27 L11 29 H3Z" fill="#3a8ef0" stroke="#222" stroke-width="0.8"/><path d="M18 8 H29 V31 H21 L18 26Z" fill="#3a8ef0" stroke="#222" stroke-width="0.8"/><path d="M4 10 Q8 9 8 12 Q8 15 4 14 M4 17 Q8 16 8 19 Q8 22 4 21 M28 13 Q24 12 24 15 Q24 18 28 17 M28 20 Q24 19 24 22 Q24 25 28 24" stroke="#555" stroke-width="1" fill="#d8d8d8"/><rect x="1.5" y="3" width="2.5" height="26" fill="#111"/><rect x="28.5" y="8" width="2.5" height="24" fill="#111"/><path d="M2.75 5 V28 M29.75 10 V31" stroke="#eee" stroke-width="1" stroke-dasharray="1,2"/><path d="M5 2 L15 1 Q21 2 22 9 L23 19 Q24 25 29 24 L26 31 L16 31 Q12 29 11 22 L10 12 Q9 5 5 2Z" fill="#e81c2c" stroke="#111" stroke-width="1"/><path d="M10.5 14 L10.8 21 Q12 28 16 31 L26 31 L29 24 Q24 25 23 19 L22.5 14Z" fill="#18c030" stroke="none"/><path d="M13 25 Q14 30 16 31 L26 31 L29 24 Q25 25 23.5 22Z" fill="#18c030" stroke="#111" stroke-width="0.8"/><path d="M9.5 10 L21.8 8.5 M11 21 L23.3 19" stroke="#111" stroke-width="1.1"/><path d="M5 2 L15 1 Q21 2 22 9 L23 19 Q24 25 29 24 L26 31 L16 31 Q12 29 11 22 L10 12 Q9 5 5 2Z" fill="none" stroke="#111" stroke-width="1"/></svg>
<div style="position:absolute;left:1256px;top:53px;width:29px;height:32px;background:radial-gradient(ellipse at 50% 50%,#fff 0,#f0c8ff 10%,#b060f0 22%,#6a2ac0 40%,#3a1870 60%,#1a0a28 85%)"></div>
<svg style="position:absolute;left:1309px;top:53px" width="32" height="32" viewBox="0 0 32 32" preserveAspectRatio="none"><path d="M3 3 H12 L14 8 V27 L11 29 H3Z" fill="#c4c4c4" stroke="#222" stroke-width="0.8"/><path d="M18 8 H29 V31 H21 L18 26Z" fill="#c4c4c4" stroke="#222" stroke-width="0.8"/><path d="M4 10 Q8 9 8 12 Q8 15 4 14 M4 17 Q8 16 8 19 Q8 22 4 21 M28 13 Q24 12 24 15 Q24 18 28 17 M28 20 Q24 19 24 22 Q24 25 28 24" stroke="#555" stroke-width="1" fill="#d8d8d8"/><rect x="1.5" y="3" width="2.5" height="26" fill="#111"/><rect x="28.5" y="8" width="2.5" height="24" fill="#111"/><path d="M2.75 5 V28 M29.75 10 V31" stroke="#eee" stroke-width="1" stroke-dasharray="1,2"/><path d="M5 2 L15 1 Q21 2 22 9 L23 19 Q24 25 29 24 L26 31 L16 31 Q12 29 11 22 L10 12 Q9 5 5 2Z" fill="#e81c2c" stroke="#111" stroke-width="1"/><path d="M10.5 14 L10.8 21 Q12 28 16 31 L26 31 L29 24 Q24 25 23 19 L22.5 14Z" fill="#e81c2c" stroke="none"/><path d="M13 25 Q14 30 16 31 L26 31 L29 24 Q25 25 23.5 22Z" fill="#e81c2c" stroke="#111" stroke-width="0.8"/><path d="M9.5 10 L21.8 8.5 M11 21 L23.3 19" stroke="#111" stroke-width="1.1"/><path d="M5 2 L15 1 Q21 2 22 9 L23 19 Q24 25 29 24 L26 31 L16 31 Q12 29 11 22 L10 12 Q9 5 5 2Z" fill="none" stroke="#111" stroke-width="1"/></svg>
<svg style="position:absolute;left:1348px;top:53px" width="32" height="32" viewBox="0 0 32 32" preserveAspectRatio="none"><path d="M3 3 H12 L14 8 V27 L11 29 H3Z" fill="#c4c4c4" stroke="#222" stroke-width="0.8"/><path d="M18 8 H29 V31 H21 L18 26Z" fill="#c4c4c4" stroke="#222" stroke-width="0.8"/><path d="M4 10 Q8 9 8 12 Q8 15 4 14 M4 17 Q8 16 8 19 Q8 22 4 21 M28 13 Q24 12 24 15 Q24 18 28 17 M28 20 Q24 19 24 22 Q24 25 28 24" stroke="#555" stroke-width="1" fill="#d8d8d8"/><rect x="1.5" y="3" width="2.5" height="26" fill="#111"/><rect x="28.5" y="8" width="2.5" height="24" fill="#111"/><path d="M2.75 5 V28 M29.75 10 V31" stroke="#eee" stroke-width="1" stroke-dasharray="1,2"/><path d="M5 2 L15 1 Q21 2 22 9 L23 19 Q24 25 29 24 L26 31 L16 31 Q12 29 11 22 L10 12 Q9 5 5 2Z" fill="#22d83a" stroke="#111" stroke-width="1"/><path d="M10.5 14 L10.8 21 Q12 28 16 31 L26 31 L29 24 Q24 25 23 19 L22.5 14Z" fill="#22d83a" stroke="none"/><path d="M13 25 Q14 30 16 31 L26 31 L29 24 Q25 25 23.5 22Z" fill="#22d83a" stroke="#111" stroke-width="0.8"/><path d="M9.5 10 L21.8 8.5 M11 21 L23.3 19" stroke="#111" stroke-width="1.1"/><path d="M5 2 L15 1 Q21 2 22 9 L23 19 Q24 25 29 24 L26 31 L16 31 Q12 29 11 22 L10 12 Q9 5 5 2Z" fill="none" stroke="#111" stroke-width="1"/></svg>
<svg style="position:absolute;left:1387px;top:53px" width="32" height="32" viewBox="0 0 32 32" preserveAspectRatio="none"><path d="M3 3 H12 L14 8 V27 L11 29 H3Z" fill="#c4c4c4" stroke="#222" stroke-width="0.8"/><path d="M18 8 H29 V31 H21 L18 26Z" fill="#c4c4c4" stroke="#222" stroke-width="0.8"/><path d="M4 10 Q8 9 8 12 Q8 15 4 14 M4 17 Q8 16 8 19 Q8 22 4 21 M28 13 Q24 12 24 15 Q24 18 28 17 M28 20 Q24 19 24 22 Q24 25 28 24" stroke="#555" stroke-width="1" fill="#d8d8d8"/><rect x="1.5" y="3" width="2.5" height="26" fill="#111"/><rect x="28.5" y="8" width="2.5" height="24" fill="#111"/><path d="M2.75 5 V28 M29.75 10 V31" stroke="#eee" stroke-width="1" stroke-dasharray="1,2"/><path d="M5 2 L15 1 Q21 2 22 9 L23 19 Q24 25 29 24 L26 31 L16 31 Q12 29 11 22 L10 12 Q9 5 5 2Z" fill="#2a5ae8" stroke="#111" stroke-width="1"/><path d="M10.5 14 L10.8 21 Q12 28 16 31 L26 31 L29 24 Q24 25 23 19 L22.5 14Z" fill="#2a5ae8" stroke="none"/><path d="M13 25 Q14 30 16 31 L26 31 L29 24 Q25 25 23.5 22Z" fill="#2a5ae8" stroke="#111" stroke-width="0.8"/><path d="M9.5 10 L21.8 8.5 M11 21 L23.3 19" stroke="#111" stroke-width="1.1"/><path d="M5 2 L15 1 Q21 2 22 9 L23 19 Q24 25 29 24 L26 31 L16 31 Q12 29 11 22 L10 12 Q9 5 5 2Z" fill="none" stroke="#111" stroke-width="1"/></svg>
<svg style="position:absolute;left:1426px;top:53px" width="32" height="32" viewBox="0 0 32 32" preserveAspectRatio="none"><path d="M3 3 H12 L14 8 V27 L11 29 H3Z" fill="#c4c4c4" stroke="#222" stroke-width="0.8"/><path d="M18 8 H29 V31 H21 L18 26Z" fill="#c4c4c4" stroke="#222" stroke-width="0.8"/><path d="M4 10 Q8 9 8 12 Q8 15 4 14 M4 17 Q8 16 8 19 Q8 22 4 21 M28 13 Q24 12 24 15 Q24 18 28 17 M28 20 Q24 19 24 22 Q24 25 28 24" stroke="#555" stroke-width="1" fill="#d8d8d8"/><rect x="1.5" y="3" width="2.5" height="26" fill="#111"/><rect x="28.5" y="8" width="2.5" height="24" fill="#111"/><path d="M2.75 5 V28 M29.75 10 V31" stroke="#eee" stroke-width="1" stroke-dasharray="1,2"/><path d="M5 2 L15 1 Q21 2 22 9 L23 19 Q24 25 29 24 L26 31 L16 31 Q12 29 11 22 L10 12 Q9 5 5 2Z" fill="#f0e840" stroke="#111" stroke-width="1"/><path d="M10.5 14 L10.8 21 Q12 28 16 31 L26 31 L29 24 Q24 25 23 19 L22.5 14Z" fill="#f0e840" stroke="none"/><path d="M13 25 Q14 30 16 31 L26 31 L29 24 Q25 25 23.5 22Z" fill="#f0e840" stroke="#111" stroke-width="0.8"/><path d="M9.5 10 L21.8 8.5 M11 21 L23.3 19" stroke="#111" stroke-width="1.1"/><path d="M5 2 L15 1 Q21 2 22 9 L23 19 Q24 25 29 24 L26 31 L16 31 Q12 29 11 22 L10 12 Q9 5 5 2Z" fill="none" stroke="#111" stroke-width="1"/></svg>
<svg style="position:absolute;left:1465px;top:53px" width="32" height="32" viewBox="0 0 32 32" preserveAspectRatio="none"><path d="M3 3 H12 L14 8 V27 L11 29 H3Z" fill="#c4c4c4" stroke="#222" stroke-width="0.8"/><path d="M18 8 H29 V31 H21 L18 26Z" fill="#c4c4c4" stroke="#222" stroke-width="0.8"/><path d="M4 10 Q8 9 8 12 Q8 15 4 14 M4 17 Q8 16 8 19 Q8 22 4 21 M28 13 Q24 12 24 15 Q24 18 28 17 M28 20 Q24 19 24 22 Q24 25 28 24" stroke="#555" stroke-width="1" fill="#d8d8d8"/><rect x="1.5" y="3" width="2.5" height="26" fill="#111"/><rect x="28.5" y="8" width="2.5" height="24" fill="#111"/><path d="M2.75 5 V28 M29.75 10 V31" stroke="#eee" stroke-width="1" stroke-dasharray="1,2"/><path d="M5 2 L15 1 Q21 2 22 9 L23 19 Q24 25 29 24 L26 31 L16 31 Q12 29 11 22 L10 12 Q9 5 5 2Z" fill="#38e0f0" stroke="#111" stroke-width="1"/><path d="M10.5 14 L10.8 21 Q12 28 16 31 L26 31 L29 24 Q24 25 23 19 L22.5 14Z" fill="#38e0f0" stroke="none"/><path d="M13 25 Q14 30 16 31 L26 31 L29 24 Q25 25 23.5 22Z" fill="#38e0f0" stroke="#111" stroke-width="0.8"/><path d="M9.5 10 L21.8 8.5 M11 21 L23.3 19" stroke="#111" stroke-width="1.1"/><path d="M5 2 L15 1 Q21 2 22 9 L23 19 Q24 25 29 24 L26 31 L16 31 Q12 29 11 22 L10 12 Q9 5 5 2Z" fill="none" stroke="#111" stroke-width="1"/></svg>
<svg style="position:absolute;left:1504px;top:53px" width="32" height="32" viewBox="0 0 32 32" preserveAspectRatio="none"><path d="M3 3 H12 L14 8 V27 L11 29 H3Z" fill="#c4c4c4" stroke="#222" stroke-width="0.8"/><path d="M18 8 H29 V31 H21 L18 26Z" fill="#c4c4c4" stroke="#222" stroke-width="0.8"/><path d="M4 10 Q8 9 8 12 Q8 15 4 14 M4 17 Q8 16 8 19 Q8 22 4 21 M28 13 Q24 12 24 15 Q24 18 28 17 M28 20 Q24 19 24 22 Q24 25 28 24" stroke="#555" stroke-width="1" fill="#d8d8d8"/><rect x="1.5" y="3" width="2.5" height="26" fill="#111"/><rect x="28.5" y="8" width="2.5" height="24" fill="#111"/><path d="M2.75 5 V28 M29.75 10 V31" stroke="#eee" stroke-width="1" stroke-dasharray="1,2"/><path d="M5 2 L15 1 Q21 2 22 9 L23 19 Q24 25 29 24 L26 31 L16 31 Q12 29 11 22 L10 12 Q9 5 5 2Z" fill="#a020d0" stroke="#111" stroke-width="1"/><path d="M10.5 14 L10.8 21 Q12 28 16 31 L26 31 L29 24 Q24 25 23 19 L22.5 14Z" fill="#a020d0" stroke="none"/><path d="M13 25 Q14 30 16 31 L26 31 L29 24 Q25 25 23.5 22Z" fill="#a020d0" stroke="#111" stroke-width="0.8"/><path d="M9.5 10 L21.8 8.5 M11 21 L23.3 19" stroke="#111" stroke-width="1.1"/><path d="M5 2 L15 1 Q21 2 22 9 L23 19 Q24 25 29 24 L26 31 L16 31 Q12 29 11 22 L10 12 Q9 5 5 2Z" fill="none" stroke="#111" stroke-width="1"/></svg>
<svg style="position:absolute;left:1543px;top:53px" width="32" height="32" viewBox="0 0 32 32" preserveAspectRatio="none"><path d="M3 3 H12 L14 8 V27 L11 29 H3Z" fill="#3a8ef0" stroke="#222" stroke-width="0.8"/><path d="M18 8 H29 V31 H21 L18 26Z" fill="#3a8ef0" stroke="#222" stroke-width="0.8"/><path d="M4 10 Q8 9 8 12 Q8 15 4 14 M4 17 Q8 16 8 19 Q8 22 4 21 M28 13 Q24 12 24 15 Q24 18 28 17 M28 20 Q24 19 24 22 Q24 25 28 24" stroke="#555" stroke-width="1" fill="#d8d8d8"/><rect x="1.5" y="3" width="2.5" height="26" fill="#111"/><rect x="28.5" y="8" width="2.5" height="24" fill="#111"/><path d="M2.75 5 V28 M29.75 10 V31" stroke="#eee" stroke-width="1" stroke-dasharray="1,2"/><path d="M5 2 L15 1 Q21 2 22 9 L23 19 Q24 25 29 24 L26 31 L16 31 Q12 29 11 22 L10 12 Q9 5 5 2Z" fill="#e81c2c" stroke="#111" stroke-width="1"/><path d="M10.5 14 L10.8 21 Q12 28 16 31 L26 31 L29 24 Q24 25 23 19 L22.5 14Z" fill="#18c030" stroke="none"/><path d="M13 25 Q14 30 16 31 L26 31 L29 24 Q25 25 23.5 22Z" fill="#18c030" stroke="#111" stroke-width="0.8"/><path d="M9.5 10 L21.8 8.5 M11 21 L23.3 19" stroke="#111" stroke-width="1.1"/><path d="M5 2 L15 1 Q21 2 22 9 L23 19 Q24 25 29 24 L26 31 L16 31 Q12 29 11 22 L10 12 Q9 5 5 2Z" fill="none" stroke="#111" stroke-width="1"/></svg>
<div style="position:absolute;left:0px;top:89px;width:1920px;height:953px;background:#f0f0f0"></div>
<div style="position:absolute;left:0px;top:89px;width:2px;height:951px;background:#a0a0a0"></div>
<div style="position:absolute;left:2px;top:89px;width:1899px;height:4px;background:#7c7c7c"></div>
<div style="position:absolute;left:2px;top:155px;width:1899px;height:4px;background:#8a8a8a"></div>
<div style="position:absolute;left:2px;top:379px;width:1809px;height:5px;background:#8a8a8a"></div>
<div style="position:absolute;left:2px;top:1017px;width:1899px;height:4px;background:#8a8a8a"></div>
<div style="position:absolute;left:1897px;top:89px;width:4px;height:932px;background:#7c7c7c"></div>
<div style="position:absolute;left:1901px;top:89px;width:19px;height:953px;background:#f0f0f0"></div>
<div style="position:absolute;left:1909px;top:109px;width:2px;height:866px;background:#8c8c8c"></div>
<div style="position:absolute;left:1918px;top:89px;width:2px;height:953px;background:#fafafa"></div>
<div style="position:absolute;left:2px;top:93px;width:1305px;height:62px;background:#fff"></div>
<div style="position:absolute;left:5px;top:96px;width:1299px;height:56px;background:#eaeaea;border:1px solid #6a6a6a;box-shadow:inset 1px 1px 0 #9a9a9a,inset -1px -1px 0 #9a9a9a;box-sizing:border-box"></div>
<div style="position:absolute;left:7px;top:98px;width:1294px;height:7px;background:#8a8a8a"></div>
<div style="position:absolute;left:7px;top:98px;width:1294px;height:17px;background:linear-gradient(#e9eff8,#e2e9f4);border-top-left-radius:6px;border-top-right-radius:6px;border-bottom:1px solid #a6a6a6;box-sizing:border-box"></div>
<div style="position:absolute;left:12.2px;top:99.96px;font:700 10.5px/14px 'Liberation Sans', sans-serif;color:#3b3b3b;letter-spacing:0.000px;white-space:pre;transform:scaleX(1.2385);transform-origin:left center;">View</div>
<div style="position:absolute;left:1307px;top:93px;width:310px;height:62px;background:#fff"></div>
<div style="position:absolute;left:1310px;top:96px;width:304px;height:56px;background:#eaeaea;border:1px solid #6a6a6a;box-shadow:inset 1px 1px 0 #9a9a9a,inset -1px -1px 0 #9a9a9a;box-sizing:border-box"></div>
<div style="position:absolute;left:1312px;top:98px;width:299px;height:7px;background:#8a8a8a"></div>
<div style="position:absolute;left:1312px;top:98px;width:299px;height:17px;background:linear-gradient(#e9eff8,#e2e9f4);border-top-left-radius:6px;border-top-right-radius:6px;border-bottom:1px solid #a6a6a6;box-sizing:border-box"></div>
<div style="position:absolute;left:1318px;top:100.36px;font:700 10.5px/14px 'Liberation Sans', sans-serif;color:#3b3b3b;letter-spacing:0.000px;white-space:pre;transform:scaleX(1.2641);transform-origin:left center;">Sensor</div>
<div style="position:absolute;left:1617px;top:93px;width:126px;height:62px;background:#fff"></div>
<div style="position:absolute;left:1620px;top:96px;width:120px;height:56px;background:#eaeaea;border:1px solid #6a6a6a;box-shadow:inset 1px 1px 0 #9a9a9a,inset -1px -1px 0 #9a9a9a;box-sizing:border-box"></div>
<div style="position:absolute;left:1622px;top:98px;width:115px;height:7px;background:#8a8a8a"></div>
<div style="position:absolute;left:1622px;top:98px;width:115px;height:17px;background:linear-gradient(#e9eff8,#e2e9f4);border-top-left-radius:6px;border-top-right-radius:6px;border-bottom:1px solid #a6a6a6;box-sizing:border-box"></div>
<div style="position:absolute;left:1628px;top:100.36px;font:700 10.5px/14px 'Liberation Sans', sans-serif;color:#3b3b3b;letter-spacing:0.000px;white-space:pre;transform:scaleX(1.2952);transform-origin:left center;">Generator</div>
<div style="position:absolute;left:1743px;top:93px;width:154px;height:62px;background:#fff"></div>
<div style="position:absolute;left:1746px;top:96px;width:148px;height:56px;background:#eaeaea;border:1px solid #6a6a6a;box-shadow:inset 1px 1px 0 #9a9a9a,inset -1px -1px 0 #9a9a9a;box-sizing:border-box"></div>
<div style="position:absolute;left:1748px;top:98px;width:143px;height:7px;background:#8a8a8a"></div>
<div style="position:absolute;left:1748px;top:98px;width:143px;height:17px;background:linear-gradient(#e9eff8,#e2e9f4);border-top-left-radius:6px;border-top-right-radius:6px;border-bottom:1px solid #a6a6a6;box-sizing:border-box"></div>
<div style="position:absolute;left:1753px;top:100.36px;font:700 10.5px/14px 'Liberation Sans', sans-serif;color:#3b3b3b;letter-spacing:0.000px;white-space:pre;transform:scaleX(1.2935);transform-origin:left center;">Parameters</div>
<div style="position:absolute;left:2px;top:159px;width:1809px;height:220px;background:#fff"></div>
<div style="position:absolute;left:5px;top:162px;width:1804px;height:216px;background:#eaeaea;border:1px solid #6f6f6f;box-sizing:border-box"></div>
<div style="position:absolute;left:6px;top:163px;width:1802px;height:214px;border:2px solid #13d813;border-left-width:1px;border-top:none;box-sizing:border-box"></div>
<div style="position:absolute;left:7px;top:163px;width:1800px;height:7px;background:#8a8a8a"></div>
<div style="position:absolute;left:7px;top:163px;width:1800px;height:14px;background:linear-gradient(#e9eff8,#e2e9f4);border-top-left-radius:6px;border-top-right-radius:6px;border-bottom:1px solid #a6a6a6;box-sizing:border-box"></div>
<div style="position:absolute;left:14px;top:165.03px;font:700 10px/13px 'Liberation Sans', sans-serif;color:#3b3b3b;letter-spacing:0.000px;white-space:pre;transform:scaleX(1.0985);transform-origin:left center;">( Average dE: 0.97 [0.63,0.32,0.47] max: 1.99 [CIE2000] )</div>
<div style="position:absolute;left:1811px;top:159px;width:90px;height:224px;background:#8a8a8a"></div>
<div style="position:absolute;left:1811px;top:159px;width:86px;height:106px;background:#fff"></div>
<div style="position:absolute;left:1814px;top:162px;width:80px;height:100px;background:#eaeaea;border:1px solid #6a6a6a;box-shadow:inset 1px 1px 0 #9a9a9a,inset -1px -1px 0 #9a9a9a;box-sizing:border-box"></div>
<div style="position:absolute;left:1816px;top:163px;width:76px;height:7px;background:#8a8a8a"></div>
<div style="position:absolute;left:1816px;top:163px;width:76px;height:16px;background:linear-gradient(#e9eff8,#e2e9f4);border-top-left-radius:6px;border-top-right-radius:6px;border-bottom:1px solid #a6a6a6;box-sizing:border-box"></div>
<div style="position:absolute;left:1822px;top:165.36px;font:700 10.5px/14px 'Liberation Sans', sans-serif;color:#3b3b3b;letter-spacing:0.000px;white-space:pre;transform:scaleX(1.2584);transform-origin:left center;">Display</div>
<div style="position:absolute;left:2px;top:383px;width:384px;height:634px;background:#fff"></div>
<div style="position:absolute;left:5px;top:386px;width:378px;height:628px;background:#eaeaea;border:1px solid #6a6a6a;box-shadow:inset 1px 1px 0 #9a9a9a,inset -1px -1px 0 #9a9a9a;box-sizing:border-box"></div>
<div style="position:absolute;left:7px;top:388px;width:374px;height:7px;background:#8a8a8a"></div>
<div style="position:absolute;left:7px;top:388px;width:374px;height:17px;background:linear-gradient(#e9eff8,#e2e9f4);border-top-left-radius:6px;border-top-right-radius:6px;border-bottom:1px solid #a6a6a6;box-sizing:border-box"></div>
<div style="position:absolute;left:12.3px;top:390.06px;font:700 10.5px/14px 'Liberation Sans', sans-serif;color:#3b3b3b;letter-spacing:0.000px;white-space:pre;transform:scaleX(1.2956);transform-origin:left center;">Selected color</div>
<div style="position:absolute;left:386px;top:383px;width:2px;height:634px;background:#8a8a8a"></div>
<div style="position:absolute;left:388px;top:383px;width:1509px;height:634px;background:#fff"></div>
<div style="position:absolute;left:391px;top:386px;width:1503px;height:628px;background:#eaeaea;border:1px solid #6a6a6a;box-shadow:inset 1px 1px 0 #9a9a9a,inset -1px -1px 0 #9a9a9a;box-sizing:border-box"></div>
<div style="position:absolute;left:392px;top:388px;width:1500px;height:7px;background:#8a8a8a"></div>
<div style="position:absolute;left:392px;top:388px;width:1500px;height:17px;background:linear-gradient(#e9eff8,#e2e9f4);border-top-left-radius:6px;border-top-right-radius:6px;border-bottom:1px solid #a6a6a6;box-sizing:border-box"></div>
<div style="position:absolute;left:398px;top:389.86px;font:700 10.5px/14px 'Liberation Sans', sans-serif;color:#3b3b3b;letter-spacing:0.000px;white-space:pre;transform:scaleX(1.3334);transform-origin:left center;">Information</div>
<div style="position:absolute;left:9px;top:122px;width:199px;height:23px;background:#fff;border:1px solid #abadb3;border-top-color:#dcdcdc;box-sizing:border-box"></div>
<div style="position:absolute;left:13px;top:126.42px;font:400 12.5px/16px 'Liberation Sans', sans-serif;color:#000;letter-spacing:0.766px;white-space:pre;">Red saturation scale</div>
<svg style="position:absolute;left:193px;top:130px" width="10" height="6"><path d="M0.5 0.5L5 5L9.5 0.5" stroke="#444" fill="none" stroke-width="1"/></svg>
<div style="position:absolute;left:216px;top:119px;width:1080px;height:26px;background:#f0f0f0;border-top:1px solid #a0a0a0;border-left:1px solid #a0a0a0;box-sizing:border-box"></div>
<div style="position:absolute;left:217.5px;top:118.75px;font:700 14px/18px 'Liberation Sans', sans-serif;color:#000;letter-spacing:1.029px;white-space:pre;">Color Space: HDTV Rec709 , White Point: D65, EOTF:  SDR, Power law (black compensation) w/gamma = 2.40, # of measures: 0 [15:45:45]</div>
<div style="position:absolute;left:1279px;top:121px;width:15px;height:11px;background:#f4f4f4;border:1px solid #c8c8c8;box-sizing:border-box"></div>
<div style="position:absolute;left:1279px;top:132px;width:15px;height:11px;background:#f4f4f4;border:1px solid #c8c8c8;box-sizing:border-box"></div>
<svg style="position:absolute;left:1282px;top:124px" width="9" height="17"><path d="M1 5L4.5 1.5L8 5Z M1 12L8 12L4.5 15.5Z" fill="#111"/></svg>
<div style="position:absolute;left:1316px;top:116.67px;font:400 12.5px/16px 'Liberation Sans', sans-serif;color:#000;letter-spacing:0.828px;white-space:pre;">Simulated sensor</div>
<div style="position:absolute;left:1318px;top:133.67px;font:400 12.5px/16px 'Liberation Sans', sans-serif;color:#000;letter-spacing:0.836px;white-space:pre;">Adaptive</div>
<svg style="position:absolute;left:1424px;top:135px" width="13" height="13"><path d="M0.5 0.5L12 6.5L0.5 12.5Z" fill="#7ad04a" stroke="#5aa83a" stroke-width="0.8"/></svg>
<svg style="position:absolute;left:1588px;top:132px" width="18" height="18"><defs><linearGradient id="eg1588" x1="0" y1="0" x2="1" y2="1"><stop offset="0" stop-color="#fff"/><stop offset="1" stop-color="#8cc8f8"/></linearGradient></defs><path d="M1.5 2 L11 1 L11.5 15 L2 16.5Z" fill="url(#eg1588)" stroke="#1a5cc0" stroke-width="1.8" stroke-linejoin="round"/><path d="M4 10 L6 13 L9 5" stroke="#d8b040" stroke-width="1.6" fill="none"/><path d="M9 10.5 L15 8.5" stroke="#4a90e0" stroke-width="1.6"/><circle cx="15.5" cy="8.3" r="1.6" fill="#d04020"/></svg>
<div style="position:absolute;left:1624px;top:116.67px;font:400 12.5px/16px 'Liberation Sans', sans-serif;color:#000;letter-spacing:0.571px;white-space:pre;">DVD manual</div>
<svg style="position:absolute;left:1717px;top:133px" width="18" height="18"><defs><linearGradient id="eg1717" x1="0" y1="0" x2="1" y2="1"><stop offset="0" stop-color="#fff"/><stop offset="1" stop-color="#8cc8f8"/></linearGradient></defs><path d="M1.5 2 L11 1 L11.5 15 L2 16.5Z" fill="url(#eg1717)" stroke="#1a5cc0" stroke-width="1.8" stroke-linejoin="round"/><path d="M4 10 L6 13 L9 5" stroke="#d8b040" stroke-width="1.6" fill="none"/><path d="M9 10.5 L15 8.5" stroke="#4a90e0" stroke-width="1.6"/><circle cx="15.5" cy="8.3" r="1.6" fill="#d04020"/></svg>
<div style="position:absolute;left:1754px;top:120px;width:12px;height:12px;background:#fff;border:1px solid #333;border-radius:2px;box-sizing:border-box"></div>
<div style="position:absolute;left:1771px;top:119.17px;font:400 12.5px/16px 'Liberation Sans', sans-serif;color:#000;letter-spacing:0.666px;white-space:pre;">Reference</div>
<div style="position:absolute;left:1754px;top:137px;width:12px;height:12px;background:#f0f0f0;border:1px solid #c8c8c8;border-radius:2px;box-sizing:border-box"></div>
<div style="position:absolute;left:1771px;top:136.17px;font:400 12.5px/16px 'Liberation Sans', sans-serif;color:#8a8a8a;letter-spacing:0.644px;white-space:pre;">XYZ Adjustment</div>
<div style="position:absolute;left:9px;top:176px;width:1780px;height:197px;background:#f0f0f0;border-top:1px solid #6d6d6d;border-left:1px solid #6d6d6d;box-sizing:border-box"></div>
<div style="position:absolute;left:10px;top:177px;width:54px;height:24px;background:#f0f0f0"></div>
<div style="position:absolute;left:-363px;width:800px;text-align:center;top:181.34px;font:700 12px/16px 'Liberation Sans', sans-serif;color:#000;letter-spacing:0.000px;white-space:pre;transform:scaleX(0.9486);transform-origin:center center;">% Sat</div>
<div style="position:absolute;left:64px;top:177px;width:342px;height:23px;background:#f0f0f0"></div>
<div style="position:absolute;left:-165.0px;width:800px;text-align:center;top:181.34px;font:700 12px/16px 'Liberation Sans', sans-serif;color:#111;letter-spacing:0.000px;white-space:pre;">0</div>
<div style="position:absolute;left:406px;top:177px;width:342px;height:23px;background:#f2c0c0"></div>
<div style="position:absolute;left:177.0px;width:800px;text-align:center;top:181.34px;font:700 12px/16px 'Liberation Sans', sans-serif;color:#111;letter-spacing:0.000px;white-space:pre;">25</div>
<div style="position:absolute;left:748px;top:177px;width:341px;height:23px;background:#f39090"></div>
<div style="position:absolute;left:518.5px;width:800px;text-align:center;top:181.34px;font:700 12px/16px 'Liberation Sans', sans-serif;color:#111;letter-spacing:0.000px;white-space:pre;">50</div>
<div style="position:absolute;left:1089px;top:177px;width:342px;height:23px;background:#f25c5c"></div>
<div style="position:absolute;left:860.0px;width:800px;text-align:center;top:181.34px;font:700 12px/16px 'Liberation Sans', sans-serif;color:#111;letter-spacing:0.000px;white-space:pre;">75</div>
<div style="position:absolute;left:1431px;top:177px;width:340px;height:23px;background:#ee2e2e"></div>
<div style="position:absolute;left:1201.0px;width:800px;text-align:center;top:181.34px;font:700 12px/16px 'Liberation Sans', sans-serif;color:#111;letter-spacing:0.000px;white-space:pre;">100</div>
<div style="position:absolute;left:10px;top:201px;width:54px;height:25px;background:#f0f0f0"></div>
<div style="position:absolute;left:64px;top:201px;width:1707px;height:25px;background:#fff"></div>
<div style="position:absolute;left:-363px;width:800px;text-align:center;top:205.84px;font:700 12px/16px 'Liberation Sans', sans-serif;color:#000;letter-spacing:0.000px;white-space:pre;">x</div>
<div style="position:absolute;right:1516.00px;top:205.67px;font:400 12.5px/16px 'Liberation Sans', sans-serif;color:#000;letter-spacing:0.000px;white-space:pre;transform:scaleX(0.8700);transform-origin:right center;">0.3126</div>
<div style="position:absolute;right:1174.00px;top:205.67px;font:400 12.5px/16px 'Liberation Sans', sans-serif;color:#000;letter-spacing:0.000px;white-space:pre;transform:scaleX(0.8700);transform-origin:right center;">0.4030</div>
<div style="position:absolute;right:833.00px;top:205.67px;font:400 12.5px/16px 'Liberation Sans', sans-serif;color:#000;letter-spacing:0.000px;white-space:pre;transform:scaleX(0.8700);transform-origin:right center;">0.4976</div>
<div style="position:absolute;right:491.00px;top:205.67px;font:400 12.5px/16px 'Liberation Sans', sans-serif;color:#000;letter-spacing:0.000px;white-space:pre;transform:scaleX(0.8700);transform-origin:right center;">0.5799</div>
<div style="position:absolute;right:151.00px;top:205.67px;font:400 12.5px/16px 'Liberation Sans', sans-serif;color:#000;letter-spacing:0.000px;white-space:pre;transform:scaleX(0.8700);transform-origin:right center;">0.6437</div>
<div style="position:absolute;left:10px;top:226px;width:54px;height:25px;background:#f0f0f0"></div>
<div style="position:absolute;left:64px;top:226px;width:1707px;height:25px;background:#fff"></div>
<div style="position:absolute;left:-363px;width:800px;text-align:center;top:230.84px;font:700 12px/16px 'Liberation Sans', sans-serif;color:#000;letter-spacing:0.000px;white-space:pre;">y</div>
<div style="position:absolute;right:1516.00px;top:230.67px;font:400 12.5px/16px 'Liberation Sans', sans-serif;color:#000;letter-spacing:0.000px;white-space:pre;transform:scaleX(0.8700);transform-origin:right center;">0.3287</div>
<div style="position:absolute;right:1174.00px;top:230.67px;font:400 12.5px/16px 'Liberation Sans', sans-serif;color:#000;letter-spacing:0.000px;white-space:pre;transform:scaleX(0.8700);transform-origin:right center;">0.3238</div>
<div style="position:absolute;right:833.00px;top:230.67px;font:400 12.5px/16px 'Liberation Sans', sans-serif;color:#000;letter-spacing:0.000px;white-space:pre;transform:scaleX(0.8700);transform-origin:right center;">0.3286</div>
<div style="position:absolute;right:491.00px;top:230.67px;font:400 12.5px/16px 'Liberation Sans', sans-serif;color:#000;letter-spacing:0.000px;white-space:pre;transform:scaleX(0.8700);transform-origin:right center;">0.3318</div>
<div style="position:absolute;right:151.00px;top:230.67px;font:400 12.5px/16px 'Liberation Sans', sans-serif;color:#000;letter-spacing:0.000px;white-space:pre;transform:scaleX(0.8700);transform-origin:right center;">0.3287</div>
<div style="position:absolute;left:10px;top:251px;width:54px;height:25px;background:#f0f0f0"></div>
<div style="position:absolute;left:64px;top:251px;width:1707px;height:25px;background:#fff"></div>
<div style="position:absolute;left:-363px;width:800px;text-align:center;top:255.84px;font:700 12px/16px 'Liberation Sans', sans-serif;color:#000;letter-spacing:0.000px;white-space:pre;">Y</div>
<div style="position:absolute;right:1516.00px;top:255.67px;font:400 12.5px/16px 'Liberation Sans', sans-serif;color:#000;letter-spacing:0.000px;white-space:pre;transform:scaleX(0.8700);transform-origin:right center;">22.459</div>
<div style="position:absolute;right:1174.00px;top:255.67px;font:400 12.5px/16px 'Liberation Sans', sans-serif;color:#000;letter-spacing:0.000px;white-space:pre;transform:scaleX(0.8700);transform-origin:right center;">21.391</div>
<div style="position:absolute;right:833.00px;top:255.67px;font:400 12.5px/16px 'Liberation Sans', sans-serif;color:#000;letter-spacing:0.000px;white-space:pre;transform:scaleX(0.8700);transform-origin:right center;">22.144</div>
<div style="position:absolute;right:491.00px;top:255.67px;font:400 12.5px/16px 'Liberation Sans', sans-serif;color:#000;letter-spacing:0.000px;white-space:pre;transform:scaleX(0.8700);transform-origin:right center;">23.559</div>
<div style="position:absolute;right:151.00px;top:255.67px;font:400 12.5px/16px 'Liberation Sans', sans-serif;color:#000;letter-spacing:0.000px;white-space:pre;transform:scaleX(0.8700);transform-origin:right center;">25.560</div>
<div style="position:absolute;left:10px;top:276px;width:54px;height:25px;background:#f0f0f0"></div>
<div style="position:absolute;left:64px;top:276px;width:1707px;height:25px;background:#aeffa8"></div>
<div style="position:absolute;left:-363px;width:800px;text-align:center;top:280.84px;font:700 12px/16px 'Liberation Sans', sans-serif;color:#000;letter-spacing:0.000px;white-space:pre;">Delta E</div>
<div style="position:absolute;right:1516.00px;top:280.84px;font:700 12px/16px 'Liberation Sans', sans-serif;color:#000;letter-spacing:0.000px;white-space:pre;">0.1</div>
<div style="position:absolute;right:1174.00px;top:280.84px;font:700 12px/16px 'Liberation Sans', sans-serif;color:#000;letter-spacing:0.000px;white-space:pre;">2.0</div>
<div style="position:absolute;right:833.00px;top:280.84px;font:700 12px/16px 'Liberation Sans', sans-serif;color:#000;letter-spacing:0.000px;white-space:pre;">1.3</div>
<div style="position:absolute;right:491.00px;top:280.84px;font:700 12px/16px 'Liberation Sans', sans-serif;color:#000;letter-spacing:0.000px;white-space:pre;">1.1</div>
<div style="position:absolute;right:151.00px;top:280.84px;font:700 12px/16px 'Liberation Sans', sans-serif;color:#000;letter-spacing:0.000px;white-space:pre;">0.3</div>
<div style="position:absolute;left:10px;top:301px;width:54px;height:25px;background:#f0f0f0"></div>
<div style="position:absolute;left:64px;top:301px;width:1707px;height:25px;background:#f0f0f0"></div>
<div style="position:absolute;left:-363px;width:800px;text-align:center;top:305.84px;font:700 12px/16px 'Liberation Sans', sans-serif;color:#000;letter-spacing:0.000px;white-space:pre;">delta xy</div>
<div style="position:absolute;right:1516.00px;top:305.67px;font:400 12.5px/16px 'Liberation Sans', sans-serif;color:#000;letter-spacing:0.000px;white-space:pre;transform:scaleX(0.8700);transform-origin:right center;">0.0003</div>
<div style="position:absolute;right:1174.00px;top:305.67px;font:400 12.5px/16px 'Liberation Sans', sans-serif;color:#000;letter-spacing:0.000px;white-space:pre;transform:scaleX(0.8700);transform-origin:right center;">0.0055</div>
<div style="position:absolute;right:833.00px;top:305.67px;font:400 12.5px/16px 'Liberation Sans', sans-serif;color:#000;letter-spacing:0.000px;white-space:pre;transform:scaleX(0.8700);transform-origin:right center;">0.0080</div>
<div style="position:absolute;right:491.00px;top:305.67px;font:400 12.5px/16px 'Liberation Sans', sans-serif;color:#000;letter-spacing:0.000px;white-space:pre;transform:scaleX(0.8700);transform-origin:right center;">0.0080</div>
<div style="position:absolute;right:151.00px;top:305.67px;font:400 12.5px/16px 'Liberation Sans', sans-serif;color:#000;letter-spacing:0.000px;white-space:pre;transform:scaleX(0.8700);transform-origin:right center;">0.0040</div>
<div style="position:absolute;left:10px;top:326px;width:54px;height:25px;background:#f0f0f0"></div>
<div style="position:absolute;left:64px;top:326px;width:1707px;height:25px;background:#dedede"></div>
<div style="position:absolute;left:-363px;width:800px;text-align:center;top:330.84px;font:700 12px/16px 'Liberation Sans', sans-serif;color:#000;letter-spacing:0.000px;white-space:pre;">delta L</div>
<div style="position:absolute;right:1516.00px;top:330.67px;font:400 12.5px/16px 'Liberation Sans', sans-serif;color:#000;letter-spacing:0.000px;white-space:pre;transform:scaleX(0.8700);transform-origin:right center;">-0.3 %</div>
<div style="position:absolute;right:1174.00px;top:330.67px;font:400 12.5px/16px 'Liberation Sans', sans-serif;color:#000;letter-spacing:0.000px;white-space:pre;transform:scaleX(0.8700);transform-origin:right center;">-6.6 %</div>
<div style="position:absolute;right:833.00px;top:330.67px;font:400 12.5px/16px 'Liberation Sans', sans-serif;color:#000;letter-spacing:0.000px;white-space:pre;transform:scaleX(0.8700);transform-origin:right center;">-5.2 %</div>
<div style="position:absolute;right:491.00px;top:330.67px;font:400 12.5px/16px 'Liberation Sans', sans-serif;color:#000;letter-spacing:0.000px;white-space:pre;transform:scaleX(0.8700);transform-origin:right center;">-1.7 %</div>
<div style="position:absolute;right:151.00px;top:330.67px;font:400 12.5px/16px 'Liberation Sans', sans-serif;color:#000;letter-spacing:0.000px;white-space:pre;transform:scaleX(0.8700);transform-origin:right center;">=</div>
<div style="position:absolute;left:64px;top:226px;width:1707px;height:1px;background:#c8c8c8"></div>
<div style="position:absolute;left:10px;top:226px;width:54px;height:2px;background:#6d6d6d"></div>
<div style="position:absolute;left:64px;top:251px;width:1707px;height:1px;background:#c8c8c8"></div>
<div style="position:absolute;left:10px;top:251px;width:54px;height:2px;background:#6d6d6d"></div>
<div style="position:absolute;left:64px;top:276px;width:1707px;height:1px;background:#c8c8c8"></div>
<div style="position:absolute;left:10px;top:276px;width:54px;height:2px;background:#6d6d6d"></div>
<div style="position:absolute;left:64px;top:301px;width:1707px;height:1px;background:#c8c8c8"></div>
<div style="position:absolute;left:10px;top:301px;width:54px;height:2px;background:#6d6d6d"></div>
<div style="position:absolute;left:64px;top:326px;width:1707px;height:1px;background:#c8c8c8"></div>
<div style="position:absolute;left:10px;top:326px;width:54px;height:2px;background:#6d6d6d"></div>
<div style="position:absolute;left:64px;top:351px;width:1707px;height:1px;background:#c8c8c8"></div>
<div style="position:absolute;left:10px;top:351px;width:54px;height:2px;background:#6d6d6d"></div>
<div style="position:absolute;left:10px;top:200px;width:1761px;height:2px;background:#6d6d6d"></div>
<div style="position:absolute;left:10px;top:351px;width:1761px;height:4px;background:#f0f0f0"></div>
<div style="position:absolute;left:405px;top:177px;width:1px;height:178px;background:#b8b8b8"></div>
<div style="position:absolute;left:747px;top:177px;width:1px;height:178px;background:#b8b8b8"></div>
<div style="position:absolute;left:1088px;top:177px;width:1px;height:178px;background:#b8b8b8"></div>
<div style="position:absolute;left:1430px;top:177px;width:1px;height:178px;background:#b8b8b8"></div>
<div style="position:absolute;left:63px;top:177px;width:2px;height:178px;background:#6d6d6d"></div>
<div style="position:absolute;left:10px;top:355px;width:1779px;height:18px;background:#f0f0f0"></div>
<div style="position:absolute;left:10px;top:355px;width:1761px;height:1px;background:#fff"></div>
<svg style="position:absolute;left:14px;top:360px" width="8" height="9"><path d="M7 0L0 4.5L7 9Z" fill="#a6a6a6"/></svg>
<svg style="position:absolute;left:1760px;top:360px" width="8" height="9"><path d="M0 0L7 4.5L0 9Z" fill="#a6a6a6"/></svg>
<div style="position:absolute;left:1771px;top:177px;width:18px;height:178px;background:#f0f0f0;border-left:1px solid #dcdcdc;box-sizing:border-box"></div>
<div style="position:absolute;left:1779px;top:195px;width:2px;height:141px;background:#8a8a8a"></div>
<div style="position:absolute;left:1789px;top:179px;width:19px;height:1px;background:#13d813"></div>
<div style="position:absolute;left:1817px;top:180.0px;width:73px;height:16px;background:#eaeaea"></div>
<svg style="position:absolute;left:1821px;top:181px" width="14" height="14"><circle cx="7" cy="7" r="6" fill="#fff" stroke="#c8c8c8" stroke-width="1"/></svg>
<div style="position:absolute;left:1838px;top:180.67px;font:400 12.5px/16px 'Liberation Sans', sans-serif;color:#8a8a8a;letter-spacing:0.000px;white-space:pre;transform:scaleX(1.1109);transform-origin:left center;">Sensor</div>
<div style="position:absolute;left:1817px;top:195.8px;width:73px;height:16px;background:#eaeaea"></div>
<svg style="position:absolute;left:1821px;top:197px" width="14" height="14"><circle cx="7" cy="7" r="6" fill="#fff" stroke="#333" stroke-width="1"/></svg>
<div style="position:absolute;left:1838px;top:196.47px;font:400 12.5px/16px 'Liberation Sans', sans-serif;color:#000;letter-spacing:0.000px;white-space:pre;transform:scaleX(0.9968);transform-origin:left center;">RGB</div>
<div style="position:absolute;left:1817px;top:211.6px;width:73px;height:16px;background:#eaeaea"></div>
<svg style="position:absolute;left:1821px;top:213px" width="14" height="14"><circle cx="7" cy="7" r="6" fill="#fff" stroke="#333" stroke-width="1"/></svg>
<div style="position:absolute;left:1838px;top:212.27px;font:400 12.5px/16px 'Liberation Sans', sans-serif;color:#000;letter-spacing:0.000px;white-space:pre;transform:scaleX(1.1106);transform-origin:left center;">XYZ</div>
<div style="position:absolute;left:1817px;top:227.4px;width:73px;height:16px;background:#eaeaea"></div>
<svg style="position:absolute;left:1821px;top:228px" width="14" height="14"><circle cx="7" cy="7" r="6" fill="#fff" stroke="#333" stroke-width="1"/></svg>
<div style="position:absolute;left:1838px;top:228.07px;font:400 12.5px/16px 'Liberation Sans', sans-serif;color:#000;letter-spacing:0.000px;white-space:pre;transform:scaleX(1.3867);transform-origin:left center;">xyz</div>
<div style="position:absolute;left:1817px;top:243.2px;width:73px;height:16px;background:#eaeaea"></div>
<svg style="position:absolute;left:1821px;top:244px" width="14" height="14"><circle cx="7" cy="7" r="6" fill="#fff" stroke="#333" stroke-width="1"/><circle cx="7" cy="7" r="5.5" fill="#fff" stroke="#0a5fc0" stroke-width="2.2"/><circle cx="7" cy="7" r="2.3" fill="#111"/></svg>
<div style="position:absolute;left:1838px;top:243.87px;font:400 12.5px/16px 'Liberation Sans', sans-serif;color:#000;letter-spacing:0.000px;white-space:pre;transform:scaleX(1.1517);transform-origin:left center;">xyY</div>
<div style="position:absolute;left:1813px;top:266px;width:82px;height:28px;background:#ececec;border-top:1px solid #fff;border-left:1px solid #fff;border-bottom:1px solid #9a9a9a;border-right:1px solid #9a9a9a;box-sizing:border-box"></div>
<div style="position:absolute;left:1813px;top:295px;width:82px;height:29px;background:#ececec;border-top:1px solid #fff;border-left:1px solid #fff;border-bottom:1px solid #9a9a9a;border-right:1px solid #9a9a9a;box-sizing:border-box"></div>
<div style="position:absolute;left:1813px;top:325px;width:82px;height:28px;background:#ececec;border-top:1px solid #fff;border-left:1px solid #fff;border-bottom:1px solid #9a9a9a;border-right:1px solid #9a9a9a;box-sizing:border-box"></div>
<svg style="position:absolute;left:1818px;top:267px" width="32" height="26" viewBox="0 0 32 32" preserveAspectRatio="none"><path d="M3 3 H12 L14 8 V27 L11 29 H3Z" fill="#c4c4c4" stroke="#222" stroke-width="0.8"/><path d="M18 8 H29 V31 H21 L18 26Z" fill="#c4c4c4" stroke="#222" stroke-width="0.8"/><path d="M4 10 Q8 9 8 12 Q8 15 4 14 M4 17 Q8 16 8 19 Q8 22 4 21 M28 13 Q24 12 24 15 Q24 18 28 17 M28 20 Q24 19 24 22 Q24 25 28 24" stroke="#555" stroke-width="1" fill="#d8d8d8"/><rect x="1.5" y="3" width="2.5" height="26" fill="#111"/><rect x="28.5" y="8" width="2.5" height="24" fill="#111"/><path d="M2.75 5 V28 M29.75 10 V31" stroke="#eee" stroke-width="1" stroke-dasharray="1,2"/><path d="M5 2 L15 1 Q21 2 22 9 L23 19 Q24 25 29 24 L26 31 L16 31 Q12 29 11 22 L10 12 Q9 5 5 2Z" fill="#e81c2c" stroke="#111" stroke-width="1"/><path d="M10.5 14 L10.8 21 Q12 28 16 31 L26 31 L29 24 Q24 25 23 19 L22.5 14Z" fill="#e81c2c" stroke="none"/><path d="M13 25 Q14 30 16 31 L26 31 L29 24 Q25 25 23.5 22Z" fill="#e81c2c" stroke="#111" stroke-width="0.8"/><path d="M9.5 10 L21.8 8.5 M11 21 L23.3 19" stroke="#111" stroke-width="1.1"/><path d="M5 2 L15 1 Q21 2 22 9 L23 19 Q24 25 29 24 L26 31 L16 31 Q12 29 11 22 L10 12 Q9 5 5 2Z" fill="none" stroke="#111" stroke-width="1"/></svg>
<div style="position:absolute;left:1861px;top:272.50px;font:400 13px/17px 'Liberation Sans', sans-serif;color:#000;letter-spacing:0.000px;white-space:pre;transform:scaleX(1.0956);transform-origin:left center;">Go</div>
<svg style="position:absolute;left:1818px;top:295px" width="30" height="28"><defs><linearGradient id="binG" x1="0" y1="0" x2="1" y2="1"><stop offset="0" stop-color="#e8f6ff"/><stop offset="1" stop-color="#5aa8e0"/></linearGradient></defs><path d="M1 4 Q14 0 28 2 L24 24 Q15 28 7 25Z" fill="url(#binG)" stroke="#7ab8e0" stroke-width="0.8"/><ellipse cx="16" cy="23" rx="8" ry="3" fill="#bfe2fa" opacity="0.8"/><path d="M13 12 A4.5 4.5 0 0 1 21 10 L23 8 L23 14 L17 14 L19 12 A2.5 2.5 0 0 0 15 13Z M21 16 A4.5 4.5 0 0 1 13 18 L11 20 L11 14 L17 14 L15 16 A2.5 2.5 0 0 0 19 15Z" fill="#18a030"/></svg>
<div style="position:absolute;left:1851px;top:301.50px;font:400 13px/17px 'Liberation Sans', sans-serif;color:#000;letter-spacing:0.000px;white-space:pre;transform:scaleX(1.0910);transform-origin:left center;">Delete</div>
<svg style="position:absolute;left:1818px;top:328px" width="34" height="24"><path d="M0 11 L2 10 L3 7 L5 7 L7 3 L8 4 L9 8 L11 9 L13 7 L15 5 L17 3 L19 5 L21 6 L22 4 L23 7 L25 9 L26 8 L28 10 L28 23 L0 23Z" fill="#ffe800"/><rect x="0" y="11" width="2" height="12" fill="#e000e0"/><rect x="2" y="10" width="4" height="13" fill="#0010f0"/><rect x="6" y="8" width="3" height="15" fill="#00e8f0"/><rect x="9" y="10" width="4" height="13" fill="#00e000"/><rect x="13" y="6" width="7" height="17" fill="#ffff00"/><rect x="20" y="5" width="3" height="18" fill="#800000"/><rect x="23" y="10" width="5" height="13" fill="#ff0000"/></svg>
<div style="position:absolute;left:1858px;top:331.50px;font:400 13px/17px 'Liberation Sans', sans-serif;color:#000;letter-spacing:0.000px;white-space:pre;transform:scaleX(0.9727);transform-origin:left center;">Refs</div>
<div style="position:absolute;left:1819px;top:361px;width:11px;height:11px;background:#fff;border:1px solid #333;border-radius:2px;box-sizing:border-box"></div>
<div style="position:absolute;left:1835px;top:359.00px;font:400 13px/17px 'Liberation Sans', sans-serif;color:#000;letter-spacing:0.000px;white-space:pre;transform:scaleX(1.0267);transform-origin:left center;">Edit</div>
<div style="position:absolute;left:15px;top:410px;width:112px;height:13px;background:#f0f0f0"></div>
<div style="position:absolute;left:18px;top:408.37px;font:400 12.5px/16px 'Liberation Sans', sans-serif;color:#000;letter-spacing:0.223px;white-space:pre;">RGB Levels</div>
<div style="position:absolute;left:232px;top:407px;width:125px;height:14px;background:#f0f0f0"></div>
<div style="position:absolute;left:241px;top:406.67px;font:400 12.5px/16px 'Liberation Sans', sans-serif;color:#000;letter-spacing:0.851px;white-space:pre;">Current Measure</div>
<div style="position:absolute;left:14px;top:433px;width:199px;height:85px;background:#f0f0f0"></div>
<div style="position:absolute;left:14px;top:477px;width:199px;height:0;border-top:1px dashed #777"></div>
<div style="position:absolute;left:26px;top:494.99px;font:700 11px/14px 'Liberation Serif', serif;color:#222;letter-spacing:0.083px;white-space:pre;">0.0%</div>
<div style="position:absolute;left:77px;top:494.99px;font:700 11px/14px 'Liberation Serif', serif;color:#222;letter-spacing:0.083px;white-space:pre;">0.0%</div>
<div style="position:absolute;left:128px;top:494.99px;font:700 11px/14px 'Liberation Serif', serif;color:#222;letter-spacing:0.083px;white-space:pre;">0.0%</div>
<div style="position:absolute;left:175px;top:494.99px;font:700 11px/14px 'Liberation Serif', serif;color:#222;letter-spacing:0.809px;white-space:pre;">dE 0.0</div>
<svg style="position:absolute;left:14px;top:505px" width="200" height="14"><rect x="0" y="8" width="199" height="6" fill="#000"/><path d="M0 8 Q24 -1 48 8Z" fill="#a80000"/><path d="M52 8 Q76 -1 100 8Z" fill="#0a8a0a"/><path d="M103 8 Q127 -1 151 8Z" fill="#0000a0"/><path d="M155 8 Q177 -1 199 8Z" fill="#c89010"/></svg>
<div style="position:absolute;left:16px;top:533px;width:192px;height:74px;background:#f0f0f0"></div>
<div style="position:absolute;left:35px;top:533.37px;font:700 12.5px/16px 'Liberation Sans', sans-serif;color:#000;letter-spacing:0.880px;white-space:pre;">Measure</div>
<div style="position:absolute;left:127px;top:533.37px;font:700 12.5px/16px 'Liberation Sans', sans-serif;color:#000;letter-spacing:0.569px;white-space:pre;">Reference</div>
<div style="position:absolute;left:18px;top:620.67px;font:400 12.5px/16px 'Liberation Sans', sans-serif;color:#000;letter-spacing:0.852px;white-space:pre;">Target</div>
<div style="position:absolute;left:50px;top:638px;width:116px;height:89px;background:conic-gradient(from 0deg at 50% 50%,#50ff00 0deg,#ffc000 45deg,#ff0000 90deg,#ff0a90 135deg,#8a00e0 180deg,#0a00ff 225deg,#0090c0 270deg,#00f090 315deg,#50ff00 360deg);border:1px solid #222;box-sizing:border-box"></div>
<div style="position:absolute;left:67px;top:652px;width:82px;height:62px;background:#000;border:1px solid #fff;border-radius:9px;box-sizing:border-box"></div>
<svg style="position:absolute;left:50px;top:638px" width="116" height="89"><g stroke="#fff" stroke-width="1" stroke-dasharray="3,2" fill="none"><path d="M15 44.5H103M58.5 14V76"/><ellipse cx="58.5" cy="44.5" rx="21" ry="15"/></g></svg>
<div style="position:absolute;left:220px;top:430px;width:153px;height:577px;background:#f0f0f0;border-top:2px solid #6d6d6d;border-left:2px solid #6d6d6d;box-sizing:border-box"></div>
<div style="position:absolute;left:222px;top:432px;width:52px;height:23px;background:#f0f0f0"></div>
<div style="position:absolute;left:275px;top:432px;width:79px;height:23px;background:#fff"></div>
<div style="position:absolute;left:222px;top:455px;width:52px;height:23px;background:#f0f0f0"></div>
<div style="position:absolute;left:275px;top:455px;width:79px;height:23px;background:#fff"></div>
<div style="position:absolute;left:222px;top:478px;width:52px;height:23px;background:#f0f0f0"></div>
<div style="position:absolute;left:275px;top:478px;width:79px;height:23px;background:#fff"></div>
<div style="position:absolute;left:222px;top:501px;width:52px;height:23px;background:#f0f0f0"></div>
<div style="position:absolute;left:275px;top:501px;width:79px;height:23px;background:#dedede"></div>
<div style="position:absolute;left:222px;top:524px;width:52px;height:23px;background:#f0f0f0"></div>
<div style="position:absolute;left:275px;top:524px;width:79px;height:23px;background:#dedede"></div>
<div style="position:absolute;left:222px;top:547px;width:52px;height:23px;background:#f0f0f0"></div>
<div style="position:absolute;left:275px;top:547px;width:79px;height:23px;background:#dedede"></div>
<div style="position:absolute;left:222px;top:570px;width:52px;height:23px;background:#f0f0f0"></div>
<div style="position:absolute;left:275px;top:570px;width:79px;height:23px;background:#fff"></div>
<div style="position:absolute;left:222px;top:593px;width:52px;height:23px;background:#f0f0f0"></div>
<div style="position:absolute;left:275px;top:593px;width:79px;height:23px;background:#fff"></div>
<div style="position:absolute;left:222px;top:616px;width:52px;height:23px;background:#f0f0f0"></div>
<div style="position:absolute;left:275px;top:616px;width:79px;height:23px;background:#fff"></div>
<div style="position:absolute;left:222px;top:639px;width:52px;height:23px;background:#f0f0f0"></div>
<div style="position:absolute;left:275px;top:639px;width:79px;height:23px;background:#dedede"></div>
<div style="position:absolute;left:222px;top:662px;width:52px;height:23px;background:#f0f0f0"></div>
<div style="position:absolute;left:275px;top:662px;width:79px;height:23px;background:#dedede"></div>
<div style="position:absolute;left:222px;top:685px;width:52px;height:23px;background:#f0f0f0"></div>
<div style="position:absolute;left:275px;top:685px;width:79px;height:23px;background:#dedede"></div>
<div style="position:absolute;left:222px;top:708px;width:52px;height:23px;background:#f0f0f0"></div>
<div style="position:absolute;left:275px;top:708px;width:79px;height:23px;background:#fff"></div>
<div style="position:absolute;left:222px;top:731px;width:52px;height:23px;background:#f0f0f0"></div>
<div style="position:absolute;left:275px;top:731px;width:79px;height:23px;background:#fff"></div>
<div style="position:absolute;left:222px;top:754px;width:52px;height:23px;background:#f0f0f0"></div>
<div style="position:absolute;left:275px;top:754px;width:79px;height:23px;background:#fff"></div>
<div style="position:absolute;left:222px;top:777px;width:52px;height:23px;background:#f0f0f0"></div>
<div style="position:absolute;left:275px;top:777px;width:79px;height:23px;background:#dedede"></div>
<div style="position:absolute;left:222px;top:800px;width:52px;height:23px;background:#f0f0f0"></div>
<div style="position:absolute;left:275px;top:800px;width:79px;height:23px;background:#dedede"></div>
<div style="position:absolute;left:222px;top:822px;width:52px;height:23px;background:#f0f0f0"></div>
<div style="position:absolute;left:275px;top:822px;width:79px;height:23px;background:#dedede"></div>
<div style="position:absolute;left:222px;top:845px;width:52px;height:23px;background:#f0f0f0"></div>
<div style="position:absolute;left:275px;top:845px;width:79px;height:23px;background:#fff"></div>
<div style="position:absolute;left:222px;top:868px;width:52px;height:23px;background:#f0f0f0"></div>
<div style="position:absolute;left:275px;top:868px;width:79px;height:23px;background:#fff"></div>
<div style="position:absolute;left:222px;top:891px;width:52px;height:23px;background:#f0f0f0"></div>
<div style="position:absolute;left:275px;top:891px;width:79px;height:23px;background:#fff"></div>
<div style="position:absolute;left:222px;top:914px;width:52px;height:23px;background:#f0f0f0"></div>
<div style="position:absolute;left:275px;top:914px;width:79px;height:23px;background:#dedede"></div>
<div style="position:absolute;left:222px;top:937px;width:52px;height:23px;background:#f0f0f0"></div>
<div style="position:absolute;left:275px;top:937px;width:79px;height:23px;background:#dedede"></div>
<div style="position:absolute;left:222px;top:960px;width:52px;height:23px;background:#f0f0f0"></div>
<div style="position:absolute;left:275px;top:960px;width:79px;height:23px;background:#dedede"></div>
<div style="position:absolute;left:222px;top:454px;width:52px;height:1px;background:#6d6d6d"></div>
<div style="position:absolute;left:275px;top:454px;width:79px;height:1px;background:#c8c8c8"></div>
<div style="position:absolute;left:-152px;width:800px;text-align:center;top:435.84px;font:700 12px/16px 'Liberation Sans', sans-serif;color:#000;letter-spacing:0.000px;white-space:pre;">Y cd/m<sup style="font-size:8px;vertical-align:5px;line-height:0">2</sup></div>
<div style="position:absolute;left:222px;top:477px;width:52px;height:1px;background:#6d6d6d"></div>
<div style="position:absolute;left:275px;top:477px;width:79px;height:1px;background:#c8c8c8"></div>
<div style="position:absolute;left:-152px;width:800px;text-align:center;top:458.81px;font:700 12px/16px 'Liberation Sans', sans-serif;color:#000;letter-spacing:0.000px;white-space:pre;">Y ftL</div>
<div style="position:absolute;left:222px;top:500px;width:52px;height:1px;background:#6d6d6d"></div>
<div style="position:absolute;left:275px;top:500px;width:79px;height:1px;background:#c8c8c8"></div>
<div style="position:absolute;left:-152px;width:800px;text-align:center;top:481.78px;font:700 12px/16px 'Liberation Sans', sans-serif;color:#000;letter-spacing:0.000px;white-space:pre;">T°</div>
<div style="position:absolute;left:222px;top:523px;width:52px;height:1px;background:#6d6d6d"></div>
<div style="position:absolute;left:275px;top:523px;width:79px;height:1px;background:#c8c8c8"></div>
<div style="position:absolute;left:-152px;width:800px;text-align:center;top:504.75px;font:700 12px/16px 'Liberation Sans', sans-serif;color:#000;letter-spacing:0.000px;white-space:pre;">X</div>
<div style="position:absolute;left:222px;top:546px;width:52px;height:1px;background:#6d6d6d"></div>
<div style="position:absolute;left:275px;top:546px;width:79px;height:1px;background:#c8c8c8"></div>
<div style="position:absolute;left:-152px;width:800px;text-align:center;top:527.72px;font:700 12px/16px 'Liberation Sans', sans-serif;color:#000;letter-spacing:0.000px;white-space:pre;">Y</div>
<div style="position:absolute;left:222px;top:569px;width:52px;height:1px;background:#6d6d6d"></div>
<div style="position:absolute;left:275px;top:569px;width:79px;height:1px;background:#c8c8c8"></div>
<div style="position:absolute;left:-152px;width:800px;text-align:center;top:550.69px;font:700 12px/16px 'Liberation Sans', sans-serif;color:#000;letter-spacing:0.000px;white-space:pre;">Z</div>
<div style="position:absolute;left:222px;top:592px;width:52px;height:1px;background:#6d6d6d"></div>
<div style="position:absolute;left:275px;top:592px;width:79px;height:1px;background:#c8c8c8"></div>
<div style="position:absolute;left:-152px;width:800px;text-align:center;top:573.66px;font:700 12px/16px 'Liberation Sans', sans-serif;color:#000;letter-spacing:0.000px;white-space:pre;">R</div>
<div style="position:absolute;left:222px;top:615px;width:52px;height:1px;background:#6d6d6d"></div>
<div style="position:absolute;left:275px;top:615px;width:79px;height:1px;background:#c8c8c8"></div>
<div style="position:absolute;left:-152px;width:800px;text-align:center;top:596.63px;font:700 12px/16px 'Liberation Sans', sans-serif;color:#000;letter-spacing:0.000px;white-space:pre;">G</div>
<div style="position:absolute;left:222px;top:638px;width:52px;height:1px;background:#6d6d6d"></div>
<div style="position:absolute;left:275px;top:638px;width:79px;height:1px;background:#c8c8c8"></div>
<div style="position:absolute;left:-152px;width:800px;text-align:center;top:619.60px;font:700 12px/16px 'Liberation Sans', sans-serif;color:#000;letter-spacing:0.000px;white-space:pre;">B</div>
<div style="position:absolute;left:222px;top:661px;width:52px;height:1px;background:#6d6d6d"></div>
<div style="position:absolute;left:275px;top:661px;width:79px;height:1px;background:#c8c8c8"></div>
<div style="position:absolute;left:-152px;width:800px;text-align:center;top:642.57px;font:700 12px/16px 'Liberation Sans', sans-serif;color:#000;letter-spacing:0.000px;white-space:pre;">x</div>
<div style="position:absolute;left:222px;top:684px;width:52px;height:1px;background:#6d6d6d"></div>
<div style="position:absolute;left:275px;top:684px;width:79px;height:1px;background:#c8c8c8"></div>
<div style="position:absolute;left:-152px;width:800px;text-align:center;top:665.54px;font:700 12px/16px 'Liberation Sans', sans-serif;color:#000;letter-spacing:0.000px;white-space:pre;">y</div>
<div style="position:absolute;left:222px;top:707px;width:52px;height:1px;background:#6d6d6d"></div>
<div style="position:absolute;left:275px;top:707px;width:79px;height:1px;background:#c8c8c8"></div>
<div style="position:absolute;left:-152px;width:800px;text-align:center;top:688.51px;font:700 12px/16px 'Liberation Sans', sans-serif;color:#000;letter-spacing:0.000px;white-space:pre;">Y</div>
<div style="position:absolute;left:222px;top:730px;width:52px;height:1px;background:#6d6d6d"></div>
<div style="position:absolute;left:275px;top:730px;width:79px;height:1px;background:#c8c8c8"></div>
<div style="position:absolute;left:-152px;width:800px;text-align:center;top:711.48px;font:700 12px/16px 'Liberation Sans', sans-serif;color:#000;letter-spacing:0.000px;white-space:pre;">x</div>
<div style="position:absolute;left:222px;top:753px;width:52px;height:1px;background:#6d6d6d"></div>
<div style="position:absolute;left:275px;top:753px;width:79px;height:1px;background:#c8c8c8"></div>
<div style="position:absolute;left:-152px;width:800px;text-align:center;top:734.45px;font:700 12px/16px 'Liberation Sans', sans-serif;color:#000;letter-spacing:0.000px;white-space:pre;">y</div>
<div style="position:absolute;left:222px;top:776px;width:52px;height:1px;background:#6d6d6d"></div>
<div style="position:absolute;left:275px;top:776px;width:79px;height:1px;background:#c8c8c8"></div>
<div style="position:absolute;left:-152px;width:800px;text-align:center;top:757.42px;font:700 12px/16px 'Liberation Sans', sans-serif;color:#000;letter-spacing:0.000px;white-space:pre;">z</div>
<div style="position:absolute;left:222px;top:799px;width:52px;height:1px;background:#6d6d6d"></div>
<div style="position:absolute;left:275px;top:799px;width:79px;height:1px;background:#c8c8c8"></div>
<div style="position:absolute;left:-152px;width:800px;text-align:center;top:780.39px;font:700 12px/16px 'Liberation Sans', sans-serif;color:#000;letter-spacing:0.000px;white-space:pre;">L</div>
<div style="position:absolute;left:222px;top:821px;width:52px;height:1px;background:#6d6d6d"></div>
<div style="position:absolute;left:275px;top:821px;width:79px;height:1px;background:#c8c8c8"></div>
<div style="position:absolute;left:-152px;width:800px;text-align:center;top:803.36px;font:700 12px/16px 'Liberation Sans', sans-serif;color:#000;letter-spacing:0.000px;white-space:pre;">a</div>
<div style="position:absolute;left:222px;top:844px;width:52px;height:1px;background:#6d6d6d"></div>
<div style="position:absolute;left:275px;top:844px;width:79px;height:1px;background:#c8c8c8"></div>
<div style="position:absolute;left:-152px;width:800px;text-align:center;top:826.33px;font:700 12px/16px 'Liberation Sans', sans-serif;color:#000;letter-spacing:0.000px;white-space:pre;">b</div>
<div style="position:absolute;left:222px;top:867px;width:52px;height:1px;background:#6d6d6d"></div>
<div style="position:absolute;left:275px;top:867px;width:79px;height:1px;background:#c8c8c8"></div>
<div style="position:absolute;left:-152px;width:800px;text-align:center;top:849.30px;font:700 12px/16px 'Liberation Sans', sans-serif;color:#000;letter-spacing:0.000px;white-space:pre;">L</div>
<div style="position:absolute;left:222px;top:890px;width:52px;height:1px;background:#6d6d6d"></div>
<div style="position:absolute;left:275px;top:890px;width:79px;height:1px;background:#c8c8c8"></div>
<div style="position:absolute;left:-152px;width:800px;text-align:center;top:872.27px;font:700 12px/16px 'Liberation Sans', sans-serif;color:#000;letter-spacing:0.000px;white-space:pre;">C</div>
<div style="position:absolute;left:222px;top:913px;width:52px;height:1px;background:#6d6d6d"></div>
<div style="position:absolute;left:275px;top:913px;width:79px;height:1px;background:#c8c8c8"></div>
<div style="position:absolute;left:-152px;width:800px;text-align:center;top:895.24px;font:700 12px/16px 'Liberation Sans', sans-serif;color:#000;letter-spacing:0.000px;white-space:pre;">H</div>
<div style="position:absolute;left:222px;top:936px;width:52px;height:1px;background:#6d6d6d"></div>
<div style="position:absolute;left:275px;top:936px;width:79px;height:1px;background:#c8c8c8"></div>
<div style="position:absolute;left:-152px;width:800px;text-align:center;top:918.21px;font:700 12px/16px 'Liberation Sans', sans-serif;color:#000;letter-spacing:0.000px;white-space:pre;">L</div>
<div style="position:absolute;left:222px;top:959px;width:52px;height:1px;background:#6d6d6d"></div>
<div style="position:absolute;left:275px;top:959px;width:79px;height:1px;background:#c8c8c8"></div>
<div style="position:absolute;left:-152px;width:800px;text-align:center;top:941.18px;font:700 12px/16px 'Liberation Sans', sans-serif;color:#000;letter-spacing:0.000px;white-space:pre;">M</div>
<div style="position:absolute;left:222px;top:982px;width:52px;height:1px;background:#6d6d6d"></div>
<div style="position:absolute;left:275px;top:982px;width:79px;height:1px;background:#c8c8c8"></div>
<div style="position:absolute;left:-152px;width:800px;text-align:center;top:964.15px;font:700 12px/16px 'Liberation Sans', sans-serif;color:#000;letter-spacing:0.000px;white-space:pre;">S</div>
<div style="position:absolute;left:274px;top:432px;width:1px;height:553px;background:#6d6d6d"></div>
<div style="position:absolute;left:222px;top:985px;width:132px;height:22px;background:#a0a0a0"></div>
<svg style="position:absolute;left:359px;top:437px" width="10" height="7"><path d="M0 7L5 0L10 7Z" fill="#a6a6a6"/></svg>
<svg style="position:absolute;left:359px;top:995px" width="10" height="7"><path d="M0 0L5 7L10 0Z" fill="#a6a6a6"/></svg>
<div style="position:absolute;left:399px;top:412px;width:301px;height:22px;background:#fff;border:1px solid #abadb3;border-top-color:#dcdcdc;box-sizing:border-box"></div>
<div style="position:absolute;left:403px;top:415.67px;font:400 12.5px/16px 'Liberation Sans', sans-serif;color:#000;letter-spacing:0.580px;white-space:pre;">Luminance - Gamma</div>
<svg style="position:absolute;left:685px;top:420px" width="10" height="6"><path d="M0.5 0.5L5 5L9.5 0.5" stroke="#444" fill="none" stroke-width="1"/></svg>
<div style="position:absolute;left:398px;top:438px;width:748px;height:571px;background:#f8f8f8;border-top:2px solid #8a8a8a;border-left:2px solid #8a8a8a;box-sizing:border-box"></div>
<div style="position:absolute;left:1145px;top:438px;width:750px;height:571px;background:#f8f8f8;border-top:2px solid #8a8a8a;border-left:2px solid #8a8a8a;box-sizing:border-box"></div>
<svg style="position:absolute;left:402px;top:443px" width="740" height="562"><defs><linearGradient id="cg402_0" x1="0" x2="1" y1="0" y2="0"><stop offset="0" stop-color="rgb(32,32,32)"/><stop offset="1" stop-color="rgb(52,52,52)"/></linearGradient><linearGradient id="cg402_1" x1="0" x2="1" y1="0" y2="0"><stop offset="0" stop-color="rgb(56,56,56)"/><stop offset="1" stop-color="rgb(75,75,75)"/></linearGradient><linearGradient id="cg402_2" x1="0" x2="1" y1="0" y2="0"><stop offset="0" stop-color="rgb(78,78,78)"/><stop offset="1" stop-color="rgb(98,98,98)"/></linearGradient><linearGradient id="cg402_3" x1="0" x2="1" y1="0" y2="0"><stop offset="0" stop-color="rgb(102,102,102)"/><stop offset="1" stop-color="rgb(121,121,121)"/></linearGradient><linearGradient id="cg402_4" x1="0" x2="1" y1="0" y2="0"><stop offset="0" stop-color="rgb(125,125,125)"/><stop offset="1" stop-color="rgb(143,143,143)"/></linearGradient><linearGradient id="cg402_5" x1="0" x2="1" y1="0" y2="0"><stop offset="0" stop-color="rgb(147,147,147)"/><stop offset="1" stop-color="rgb(165,165,165)"/></linearGradient><linearGradient id="cg402_6" x1="0" x2="1" y1="0" y2="0"><stop offset="0" stop-color="rgb(168,168,168)"/><stop offset="1" stop-color="rgb(185,185,185)"/></linearGradient><linearGradient id="cg402_7" x1="0" x2="1" y1="0" y2="0"><stop offset="0" stop-color="rgb(189,189,189)"/><stop offset="1" stop-color="rgb(205,205,205)"/></linearGradient><linearGradient id="cg402_8" x1="0" x2="1" y1="0" y2="0"><stop offset="0" stop-color="rgb(210,210,210)"/><stop offset="1" stop-color="rgb(226,226,226)"/></linearGradient><linearGradient id="cg402_9" x1="0" x2="1" y1="0" y2="0"><stop offset="0" stop-color="rgb(232,232,232)"/><stop offset="1" stop-color="rgb(250,250,250)"/></linearGradient></defs><rect x="0.00" y="0" width="74.50" height="562" fill="url(#cg402_0)"/><rect x="74.00" y="0" width="74.50" height="562" fill="url(#cg402_1)"/><rect x="148.00" y="0" width="74.50" height="562" fill="url(#cg402_2)"/><rect x="222.00" y="0" width="74.50" height="562" fill="url(#cg402_3)"/><rect x="296.00" y="0" width="74.50" height="562" fill="url(#cg402_4)"/><rect x="370.00" y="0" width="74.50" height="562" fill="url(#cg402_5)"/><rect x="444.00" y="0" width="74.50" height="562" fill="url(#cg402_6)"/><rect x="518.00" y="0" width="74.50" height="562" fill="url(#cg402_7)"/><rect x="592.00" y="0" width="74.50" height="562" fill="url(#cg402_8)"/><rect x="666.00" y="0" width="74.50" height="562" fill="url(#cg402_9)"/><rect x="73.5" y="0" width="1.6" height="562" fill="#0b4a4a"/><rect x="147.5" y="0" width="1.6" height="562" fill="#0b4a4a"/><rect x="221.5" y="0" width="1.6" height="562" fill="#0b4a4a"/><rect x="295.5" y="0" width="1.6" height="562" fill="#0b4a4a"/><rect x="369.5" y="0" width="1.6" height="562" fill="#0b4a4a"/><rect x="443.5" y="0" width="1.6" height="562" fill="#0b4a4a"/><rect x="517.5" y="0" width="1.6" height="562" fill="#0b4a4a"/><rect x="591.5" y="0" width="1.6" height="562" fill="#0b4a4a"/><rect x="665.5" y="0" width="1.6" height="562" fill="#0b4a4a"/><rect x="0" y="0" width="1.6" height="562" fill="#0b4a4a"/><rect x="0" y="474.90" width="740" height="1.6" fill="#0b4a4a"/><text x="3" y="471.20" font-family="Liberation Serif" font-size="13" fill="#d8d8d8" textLength="55" lengthAdjust="spacingAndGlyphs">20 cd m-2</text><rect x="0" y="388.40" width="740" height="1.6" fill="#0b4a4a"/><text x="3" y="384.70" font-family="Liberation Serif" font-size="13" fill="#d8d8d8" textLength="55" lengthAdjust="spacingAndGlyphs">40 cd m-2</text><rect x="0" y="301.90" width="740" height="1.6" fill="#0b4a4a"/><text x="3" y="298.20" font-family="Liberation Serif" font-size="13" fill="#d8d8d8" textLength="55" lengthAdjust="spacingAndGlyphs">60 cd m-2</text><rect x="0" y="215.40" width="740" height="1.6" fill="#0b4a4a"/><text x="3" y="211.70" font-family="Liberation Serif" font-size="13" fill="#d8d8d8" textLength="55" lengthAdjust="spacingAndGlyphs">80 cd m-2</text><rect x="0" y="128.90" width="740" height="1.6" fill="#0b4a4a"/><text x="3" y="125.20" font-family="Liberation Serif" font-size="13" fill="#d8d8d8" textLength="62" lengthAdjust="spacingAndGlyphs">100 cd m-2</text><rect x="0" y="42.40" width="740" height="1.6" fill="#0b4a4a"/><text x="3" y="38.70" font-family="Liberation Serif" font-size="13" fill="#d8d8d8" textLength="62" lengthAdjust="spacingAndGlyphs">120 cd m-2</text><text x="76.00" y="557.5" font-family="Liberation Serif" font-size="13" fill="#dcdcdc" textLength="61" lengthAdjust="spacingAndGlyphs">10% White</text><text x="150.00" y="557.5" font-family="Liberation Serif" font-size="13" fill="#d4d4d4" textLength="61" lengthAdjust="spacingAndGlyphs">20% White</text><text x="224.00" y="557.5" font-family="Liberation Serif" font-size="13" fill="#c4c4c4" textLength="61" lengthAdjust="spacingAndGlyphs">30% White</text><text x="298.00" y="557.5" font-family="Liberation Serif" font-size="13" fill="#a2a2a2" textLength="61" lengthAdjust="spacingAndGlyphs">40% White</text><text x="372.00" y="557.5" font-family="Liberation Serif" font-size="13" fill="#909090" textLength="61" lengthAdjust="spacingAndGlyphs">50% White</text><text x="446.00" y="557.5" font-family="Liberation Serif" font-size="13" fill="#6e6e6e" textLength="61" lengthAdjust="spacingAndGlyphs">60% White</text><text x="520.00" y="557.5" font-family="Liberation Serif" font-size="13" fill="#555" textLength="61" lengthAdjust="spacingAndGlyphs">70% White</text><text x="594.00" y="557.5" font-family="Liberation Serif" font-size="13" fill="#3a3a3a" textLength="61" lengthAdjust="spacingAndGlyphs">80% White</text><text x="668.00" y="557.5" font-family="Liberation Serif" font-size="13" fill="#222" textLength="61" lengthAdjust="spacingAndGlyphs">90% White</text><text x="383" y="14.5" font-family="Liberation Sans" font-weight="700" font-size="15.5" fill="#d8d800" text-anchor="middle" textLength="153" lengthAdjust="spacingAndGlyphs">Luminance Response</text><text x="575" y="519.2" font-family="Liberation Sans" font-weight="700" font-size="15.5" fill="#8a8a8a" fill-opacity="0.85" textLength="155" lengthAdjust="spacingAndGlyphs">hcfr.sourceforge.net</text><path d="M-2.0 562.2 L35.0 561.8 L72.0 560.1 L109.0 556.7 L146.0 551.2 L183.0 543.5 L220.0 533.2 L257.0 520.2 L294.0 504.4 L331.0 485.5 L368.0 463.5 L405.0 438.1 L442.0 409.3 L479.0 376.9 L516.0 340.8 L553.0 300.9 L590.0 257.1 L627.0 209.4 L664.0 157.5 L701.0 101.4 L738.0 41.0" stroke="#ffff00" stroke-width="2" fill="none"/><path d="M-2.0 562.2 L35.0 561.8 L72.0 560.1 L109.0 556.7 L146.0 551.2 L183.0 543.5 L220.0 533.2 L257.0 520.2 L294.0 504.4 L331.0 485.5 L368.0 463.5 L405.0 438.1 L442.0 409.3 L479.0 376.9 L516.0 340.8 L553.0 300.9 L590.0 257.1 L627.0 209.4 L664.0 157.5 L701.0 101.4 L738.0 41.0" stroke="#ffffff" stroke-width="1" stroke-dasharray="3,5" fill="none" opacity="0.8"/><rect x="-6.0" y="558.2" width="8" height="8" fill="#e4e4e4"/><rect x="31.0" y="557.8" width="8" height="8" fill="#e4e4e4"/><rect x="68.0" y="556.1" width="8" height="8" fill="#e4e4e4"/><rect x="105.0" y="552.7" width="8" height="8" fill="#e4e4e4"/><rect x="142.0" y="547.2" width="8" height="8" fill="#e4e4e4"/><rect x="179.0" y="539.5" width="8" height="8" fill="#e4e4e4"/><rect x="216.0" y="529.2" width="8" height="8" fill="#e4e4e4"/><rect x="253.0" y="516.2" width="8" height="8" fill="#e4e4e4"/><rect x="290.0" y="500.4" width="8" height="8" fill="#e4e4e4"/><rect x="327.0" y="481.5" width="8" height="8" fill="#e4e4e4"/><rect x="364.0" y="459.5" width="8" height="8" fill="#e4e4e4"/><rect x="401.0" y="434.1" width="8" height="8" fill="#e4e4e4"/><rect x="438.0" y="405.3" width="8" height="8" fill="#e4e4e4"/><rect x="475.0" y="372.9" width="8" height="8" fill="#e4e4e4"/><rect x="512.0" y="336.8" width="8" height="8" fill="#e4e4e4"/><rect x="549.0" y="296.9" width="8" height="8" fill="#e4e4e4"/><rect x="586.0" y="253.1" width="8" height="8" fill="#e4e4e4"/><rect x="623.0" y="205.4" width="8" height="8" fill="#e4e4e4"/><rect x="660.0" y="153.5" width="8" height="8" fill="#e4e4e4"/><rect x="697.0" y="97.4" width="8" height="8" fill="#e4e4e4"/><rect x="734.0" y="37.0" width="8" height="8" fill="#e4e4e4"/></svg>
<svg style="position:absolute;left:1150px;top:443px" width="740" height="562"><defs><linearGradient id="cg1150_0" x1="0" x2="1" y1="0" y2="0"><stop offset="0" stop-color="rgb(32,32,32)"/><stop offset="1" stop-color="rgb(52,52,52)"/></linearGradient><linearGradient id="cg1150_1" x1="0" x2="1" y1="0" y2="0"><stop offset="0" stop-color="rgb(56,56,56)"/><stop offset="1" stop-color="rgb(75,75,75)"/></linearGradient><linearGradient id="cg1150_2" x1="0" x2="1" y1="0" y2="0"><stop offset="0" stop-color="rgb(78,78,78)"/><stop offset="1" stop-color="rgb(98,98,98)"/></linearGradient><linearGradient id="cg1150_3" x1="0" x2="1" y1="0" y2="0"><stop offset="0" stop-color="rgb(102,102,102)"/><stop offset="1" stop-color="rgb(121,121,121)"/></linearGradient><linearGradient id="cg1150_4" x1="0" x2="1" y1="0" y2="0"><stop offset="0" stop-color="rgb(125,125,125)"/><stop offset="1" stop-color="rgb(143,143,143)"/></linearGradient><linearGradient id="cg1150_5" x1="0" x2="1" y1="0" y2="0"><stop offset="0" stop-color="rgb(147,147,147)"/><stop offset="1" stop-color="rgb(165,165,165)"/></linearGradient><linearGradient id="cg1150_6" x1="0" x2="1" y1="0" y2="0"><stop offset="0" stop-color="rgb(168,168,168)"/><stop offset="1" stop-color="rgb(185,185,185)"/></linearGradient><linearGradient id="cg1150_7" x1="0" x2="1" y1="0" y2="0"><stop offset="0" stop-color="rgb(189,189,189)"/><stop offset="1" stop-color="rgb(205,205,205)"/></linearGradient><linearGradient id="cg1150_8" x1="0" x2="1" y1="0" y2="0"><stop offset="0" stop-color="rgb(210,210,210)"/><stop offset="1" stop-color="rgb(226,226,226)"/></linearGradient><linearGradient id="cg1150_9" x1="0" x2="1" y1="0" y2="0"><stop offset="0" stop-color="rgb(232,232,232)"/><stop offset="1" stop-color="rgb(250,250,250)"/></linearGradient></defs><rect x="0.00" y="0" width="74.50" height="562" fill="url(#cg1150_0)"/><rect x="74.00" y="0" width="74.50" height="562" fill="url(#cg1150_1)"/><rect x="148.00" y="0" width="74.50" height="562" fill="url(#cg1150_2)"/><rect x="222.00" y="0" width="74.50" height="562" fill="url(#cg1150_3)"/><rect x="296.00" y="0" width="74.50" height="562" fill="url(#cg1150_4)"/><rect x="370.00" y="0" width="74.50" height="562" fill="url(#cg1150_5)"/><rect x="444.00" y="0" width="74.50" height="562" fill="url(#cg1150_6)"/><rect x="518.00" y="0" width="74.50" height="562" fill="url(#cg1150_7)"/><rect x="592.00" y="0" width="74.50" height="562" fill="url(#cg1150_8)"/><rect x="666.00" y="0" width="74.50" height="562" fill="url(#cg1150_9)"/><rect x="73.5" y="0" width="1.6" height="562" fill="#0b4a4a"/><rect x="147.5" y="0" width="1.6" height="562" fill="#0b4a4a"/><rect x="221.5" y="0" width="1.6" height="562" fill="#0b4a4a"/><rect x="295.5" y="0" width="1.6" height="562" fill="#0b4a4a"/><rect x="369.5" y="0" width="1.6" height="562" fill="#0b4a4a"/><rect x="443.5" y="0" width="1.6" height="562" fill="#0b4a4a"/><rect x="517.5" y="0" width="1.6" height="562" fill="#0b4a4a"/><rect x="591.5" y="0" width="1.6" height="562" fill="#0b4a4a"/><rect x="665.5" y="0" width="1.6" height="562" fill="#0b4a4a"/><rect x="0" y="0" width="1.6" height="562" fill="#0b4a4a"/><rect x="0" y="27.70" width="740" height="1.6" fill="#0b4a4a"/><text x="2" y="24.00" font-family="Liberation Serif" font-size="13" fill="#d8d8d8">2.9</text><rect x="0" y="55.70" width="740" height="1.6" fill="#0b4a4a"/><text x="2" y="52.00" font-family="Liberation Serif" font-size="13" fill="#d8d8d8">2.8</text><rect x="0" y="83.70" width="740" height="1.6" fill="#0b4a4a"/><text x="2" y="80.00" font-family="Liberation Serif" font-size="13" fill="#d8d8d8">2.7</text><rect x="0" y="111.70" width="740" height="1.6" fill="#0b4a4a"/><text x="2" y="108.00" font-family="Liberation Serif" font-size="13" fill="#d8d8d8">2.6</text><rect x="0" y="139.70" width="740" height="1.6" fill="#0b4a4a"/><text x="2" y="136.00" font-family="Liberation Serif" font-size="13" fill="#d8d8d8">2.5</text><rect x="0" y="167.70" width="740" height="1.6" fill="#0b4a4a"/><text x="2" y="164.00" font-family="Liberation Serif" font-size="13" fill="#d8d8d8">2.4</text><rect x="0" y="195.70" width="740" height="1.6" fill="#0b4a4a"/><text x="2" y="192.00" font-family="Liberation Serif" font-size="13" fill="#d8d8d8">2.3</text><rect x="0" y="223.70" width="740" height="1.6" fill="#0b4a4a"/><text x="2" y="220.00" font-family="Liberation Serif" font-size="13" fill="#d8d8d8">2.2</text><rect x="0" y="251.70" width="740" height="1.6" fill="#0b4a4a"/><text x="2" y="248.00" font-family="Liberation Serif" font-size="13" fill="#d8d8d8">2.1</text><rect x="0" y="279.70" width="740" height="1.6" fill="#0b4a4a"/><text x="2" y="276.00" font-family="Liberation Serif" font-size="13" fill="#d8d8d8">2</text><rect x="0" y="307.70" width="740" height="1.6" fill="#0b4a4a"/><text x="2" y="304.00" font-family="Liberation Serif" font-size="13" fill="#d8d8d8">1.9</text><rect x="0" y="335.70" width="740" height="1.6" fill="#0b4a4a"/><text x="2" y="332.00" font-family="Liberation Serif" font-size="13" fill="#d8d8d8">1.8</text><rect x="0" y="363.70" width="740" height="1.6" fill="#0b4a4a"/><text x="2" y="360.00" font-family="Liberation Serif" font-size="13" fill="#d8d8d8">1.7</text><rect x="0" y="391.70" width="740" height="1.6" fill="#0b4a4a"/><text x="2" y="388.00" font-family="Liberation Serif" font-size="13" fill="#d8d8d8">1.6</text><rect x="0" y="419.70" width="740" height="1.6" fill="#0b4a4a"/><text x="2" y="416.00" font-family="Liberation Serif" font-size="13" fill="#d8d8d8">1.5</text><rect x="0" y="447.70" width="740" height="1.6" fill="#0b4a4a"/><text x="2" y="444.00" font-family="Liberation Serif" font-size="13" fill="#d8d8d8">1.4</text><rect x="0" y="475.70" width="740" height="1.6" fill="#0b4a4a"/><text x="2" y="472.00" font-family="Liberation Serif" font-size="13" fill="#d8d8d8">1.3</text><rect x="0" y="503.70" width="740" height="1.6" fill="#0b4a4a"/><text x="2" y="500.00" font-family="Liberation Serif" font-size="13" fill="#d8d8d8">1.2</text><rect x="0" y="531.70" width="740" height="1.6" fill="#0b4a4a"/><text x="2" y="528.00" font-family="Liberation Serif" font-size="13" fill="#d8d8d8">1.1</text><text x="76.00" y="557.5" font-family="Liberation Serif" font-size="13" fill="#dcdcdc" textLength="61" lengthAdjust="spacingAndGlyphs">10% White</text><text x="150.00" y="557.5" font-family="Liberation Serif" font-size="13" fill="#d4d4d4" textLength="61" lengthAdjust="spacingAndGlyphs">20% White</text><text x="224.00" y="557.5" font-family="Liberation Serif" font-size="13" fill="#c4c4c4" textLength="61" lengthAdjust="spacingAndGlyphs">30% White</text><text x="298.00" y="557.5" font-family="Liberation Serif" font-size="13" fill="#a2a2a2" textLength="61" lengthAdjust="spacingAndGlyphs">40% White</text><text x="372.00" y="557.5" font-family="Liberation Serif" font-size="13" fill="#909090" textLength="61" lengthAdjust="spacingAndGlyphs">50% White</text><text x="446.00" y="557.5" font-family="Liberation Serif" font-size="13" fill="#6e6e6e" textLength="61" lengthAdjust="spacingAndGlyphs">60% White</text><text x="520.00" y="557.5" font-family="Liberation Serif" font-size="13" fill="#555" textLength="61" lengthAdjust="spacingAndGlyphs">70% White</text><text x="594.00" y="557.5" font-family="Liberation Serif" font-size="13" fill="#3a3a3a" textLength="61" lengthAdjust="spacingAndGlyphs">80% White</text><text x="668.00" y="557.5" font-family="Liberation Serif" font-size="13" fill="#222" textLength="61" lengthAdjust="spacingAndGlyphs">90% White</text><text x="382.5" y="15" font-family="Liberation Sans" font-weight="700" font-size="15.5" fill="#d8d800" text-anchor="middle" textLength="103" lengthAdjust="spacingAndGlyphs">EOTF(Gamma)</text><text x="575" y="519.2" font-family="Liberation Sans" font-weight="700" font-size="15.5" fill="#8a8a8a" fill-opacity="0.85" textLength="155" lengthAdjust="spacingAndGlyphs">hcfr.sourceforge.net</text><path d="M33.1 206.6 L70.2 172.7 L107.3 166.5 L144.4 168.5 L181.5 166.5 L218.6 168.5 L255.7 167.4 L292.8 168.5 L329.9 168.5 L367.0 168.5 L404.1 167.4 L441.2 170.5 L478.3 166.5 L515.4 167.4 L552.5 168.5 L589.6 166.5 L626.7 166.5 L663.8 175.2 L700.9 173.3" stroke="#ffff00" stroke-width="2" fill="none"/><path d="M33.1 168.5 L70.2 168.5 L107.3 168.5 L144.4 168.5 L181.5 168.5 L218.6 168.5 L255.7 168.5 L292.8 168.5 L329.9 168.5 L367.0 168.5 L404.1 168.5 L441.2 168.5 L478.3 168.5 L515.4 168.5 L552.5 168.5 L589.6 168.5 L626.7 168.5 L663.8 168.5 L700.9 168.5" stroke="#ffffff" stroke-width="1" stroke-dasharray="3,3" fill="none"/><rect x="29.1" y="202.6" width="8" height="8" fill="#ffff00"/><rect x="29.1" y="164.5" width="8" height="8" fill="#e4e4e4"/><rect x="66.2" y="168.7" width="8" height="8" fill="#ffff00"/><rect x="66.2" y="164.5" width="8" height="8" fill="#e4e4e4"/><rect x="103.3" y="162.5" width="8" height="8" fill="#ffff00"/><rect x="103.3" y="164.5" width="8" height="8" fill="#e4e4e4"/><rect x="140.4" y="164.5" width="8" height="8" fill="#ffff00"/><rect x="140.4" y="164.5" width="8" height="8" fill="#e4e4e4"/><rect x="177.5" y="162.5" width="8" height="8" fill="#ffff00"/><rect x="177.5" y="164.5" width="8" height="8" fill="#e4e4e4"/><rect x="214.6" y="164.5" width="8" height="8" fill="#ffff00"/><rect x="214.6" y="164.5" width="8" height="8" fill="#e4e4e4"/><rect x="251.7" y="163.4" width="8" height="8" fill="#ffff00"/><rect x="251.7" y="164.5" width="8" height="8" fill="#e4e4e4"/><rect x="288.8" y="164.5" width="8" height="8" fill="#ffff00"/><rect x="288.8" y="164.5" width="8" height="8" fill="#e4e4e4"/><rect x="325.9" y="164.5" width="8" height="8" fill="#ffff00"/><rect x="325.9" y="164.5" width="8" height="8" fill="#e4e4e4"/><rect x="363.0" y="164.5" width="8" height="8" fill="#ffff00"/><rect x="363.0" y="164.5" width="8" height="8" fill="#e4e4e4"/><rect x="400.1" y="163.4" width="8" height="8" fill="#ffff00"/><rect x="400.1" y="164.5" width="8" height="8" fill="#e4e4e4"/><rect x="437.2" y="166.5" width="8" height="8" fill="#ffff00"/><rect x="437.2" y="164.5" width="8" height="8" fill="#e4e4e4"/><rect x="474.3" y="162.5" width="8" height="8" fill="#ffff00"/><rect x="474.3" y="164.5" width="8" height="8" fill="#e4e4e4"/><rect x="511.4" y="163.4" width="8" height="8" fill="#ffff00"/><rect x="511.4" y="164.5" width="8" height="8" fill="#e4e4e4"/><rect x="548.5" y="164.5" width="8" height="8" fill="#ffff00"/><rect x="548.5" y="164.5" width="8" height="8" fill="#e4e4e4"/><rect x="585.6" y="162.5" width="8" height="8" fill="#ffff00"/><rect x="585.6" y="164.5" width="8" height="8" fill="#e4e4e4"/><rect x="622.7" y="162.5" width="8" height="8" fill="#ffff00"/><rect x="622.7" y="164.5" width="8" height="8" fill="#e4e4e4"/><rect x="659.8" y="171.2" width="8" height="8" fill="#ffff00"/><rect x="659.8" y="164.5" width="8" height="8" fill="#e4e4e4"/><rect x="696.9" y="169.3" width="8" height="8" fill="#ffff00"/><rect x="696.9" y="164.5" width="8" height="8" fill="#e4e4e4"/></svg>
<div style="position:absolute;left:0px;top:1021px;width:1920px;height:21px;background:#f0f0f0"></div>
<div style="position:absolute;left:0px;top:1021px;width:2px;height:19px;background:#a0a0a0"></div>
<div style="position:absolute;left:19px;top:1030px;width:1825px;height:2px;background:#8a8a8a"></div>
<div style="position:absolute;left:0px;top:1042px;width:1920px;height:1px;background:#000"></div>
<div style="position:absolute;left:0px;top:1043px;width:1920px;height:18px;background:#f0f0f0"></div>
<div style="position:absolute;left:0px;top:1042px;width:54px;height:19px;background:#000"></div>
<div style="position:absolute;left:1px;top:1043px;width:16px;height:16px;background:#f0f0f0;border-top:1px solid #fff;border-left:1px solid #fff;border-right:1px solid #a0a0a0;border-bottom:1px solid #a0a0a0;box-sizing:border-box"></div>
<div style="position:absolute;left:18px;top:1043px;width:16px;height:16px;background:#f0f0f0;border-top:1px solid #fff;border-left:1px solid #fff;border-right:1px solid #a0a0a0;border-bottom:1px solid #a0a0a0;box-sizing:border-box"></div>
<div style="position:absolute;left:35px;top:1043px;width:16px;height:16px;background:#f0f0f0;border-top:1px solid #fff;border-left:1px solid #fff;border-right:1px solid #a0a0a0;border-bottom:1px solid #a0a0a0;box-sizing:border-box"></div>
<svg style="position:absolute;left:5px;top:1047px" width="9" height="9"><path d="M0.5 0.5L8.5 8.5M8.5 0.5L0.5 8.5" stroke="#000" stroke-width="1.3"/></svg>
<svg style="position:absolute;left:24px;top:1047px" width="5" height="9"><path d="M4.5 0L0 4.5L4.5 9Z" fill="#000"/></svg>
<svg style="position:absolute;left:42px;top:1047px" width="5" height="9"><path d="M0 0L4.5 4.5L0 9Z" fill="#000"/></svg>
<svg style="position:absolute;left:0px;top:1042px" width="340" height="20"><path d="M120 1 L128.5 18.5 L186.5 18.5 L195 1Z" fill="#eeeeee"/><path d="M120 1 L128.5 18.5 M186.5 18.5 L195 1" stroke="#000" stroke-width="1.1" fill="none"/><path d="M128.5 18.5 L186.5 18.5" stroke="#8a8a8a" stroke-width="1"/><path d="M187 1 L195.5 18.5 L238.5 18.5 L247 1Z" fill="#eeeeee"/><path d="M187 1 L195.5 18.5 M238.5 18.5 L247 1" stroke="#000" stroke-width="1.1" fill="none"/><path d="M195.5 18.5 L238.5 18.5" stroke="#8a8a8a" stroke-width="1"/><path d="M239 1 L247.5 18.5 L312.5 18.5 L321 1Z" fill="#eeeeee"/><path d="M239 1 L247.5 18.5 M312.5 18.5 L321 1" stroke="#000" stroke-width="1.1" fill="none"/><path d="M247.5 18.5 L312.5 18.5" stroke="#8a8a8a" stroke-width="1"/><path d="M54 1 L62.5 18.5 L119.5 18.5 L128 1Z" fill="#ffffff"/><path d="M54 1 L62.5 18.5 M119.5 18.5 L128 1" stroke="#000" stroke-width="1.1" fill="none"/><path d="M62.5 18.5 L119.5 18.5" stroke="#8a8a8a" stroke-width="1"/></svg>
<div style="position:absolute;left:66.5px;top:1043.66px;font:700 10.5px/14px 'Liberation Sans', sans-serif;color:#000;letter-spacing:0.222px;white-space:pre;">Measures</div>
<div style="position:absolute;left:134px;top:1044.34px;font:400 10px/13px 'Liberation Sans', sans-serif;color:#000;letter-spacing:0.000px;white-space:pre;transform:scaleX(0.9137);transform-origin:left center;">Luminance</div>
<div style="position:absolute;left:200px;top:1044.34px;font:400 10px/13px 'Liberation Sans', sans-serif;color:#000;letter-spacing:0.000px;white-space:pre;transform:scaleX(0.9167);transform-origin:left center;">Gamma</div>
<div style="position:absolute;left:255.5px;top:1044.34px;font:400 10px/13px 'Liberation Sans', sans-serif;color:#000;letter-spacing:0.000px;white-space:pre;transform:scaleX(0.9221);transform-origin:left center;">RGB Levels</div>
<svg style="position:absolute;left:1751px;top:1044px" width="15" height="15"><path d="M1 1H13V10L11 14H8L7 12H5L3 14H1Z" fill="#6a6a10" stroke="#222" stroke-width="0.8"/><rect x="3" y="3" width="8" height="5" fill="#e02020"/><rect x="9" y="10" width="4" height="4" fill="#ffd800"/></svg>
<div style="position:absolute;left:1846px;top:1044px;width:13px;height:13px;background:#fff;border:1px solid #333;border-radius:2px;box-sizing:border-box"></div>
<div style="position:absolute;left:1863px;top:1042.97px;font:400 12.5px/16px 'Liberation Sans', sans-serif;color:#000;letter-spacing:0.000px;white-space:pre;transform:scaleX(0.8583);transform-origin:left center;">Reference</div>
<div style="position:absolute;left:0px;top:1061px;width:1920px;height:19px;background:#e6ecf5"></div>
<div style="position:absolute;left:2.5px;top:1064.12px;font:400 11.5px/15px 'Liberation Sans', sans-serif;color:#000;letter-spacing:0.000px;white-space:pre;transform:scaleX(0.9476);transform-origin:left center;">Ready</div>
<div style="position:absolute;left:1742px;top:1062px;width:75px;height:18px;border-top:1px solid #a6b8d2;border-left:1px solid #a6b8d2;box-sizing:border-box"></div>
<div style="position:absolute;left:1820px;top:1062px;width:27px;height:18px;border-top:1px solid #a6b8d2;border-left:1px solid #a6b8d2;box-sizing:border-box"></div>
<div style="position:absolute;left:1822px;top:1063.27px;font:400 12.5px/16px 'Liberation Sans', sans-serif;color:#000;letter-spacing:0.000px;white-space:pre;transform:scaleX(0.8559);transform-origin:left center;">CAP</div>
<div style="position:absolute;left:1851px;top:1062px;width:32px;height:18px;border-top:1px solid #a6b8d2;border-left:1px solid #a6b8d2;box-sizing:border-box"></div>
<div style="position:absolute;left:1853px;top:1063.27px;font:400 12.5px/16px 'Liberation Sans', sans-serif;color:#000;letter-spacing:0.000px;white-space:pre;transform:scaleX(0.9484);transform-origin:left center;">NUM</div>
<div style="position:absolute;left:1887px;top:1062px;width:33px;height:18px;border-top:1px solid #a6b8d2;border-left:1px solid #a6b8d2;box-sizing:border-box"></div></body></html>
